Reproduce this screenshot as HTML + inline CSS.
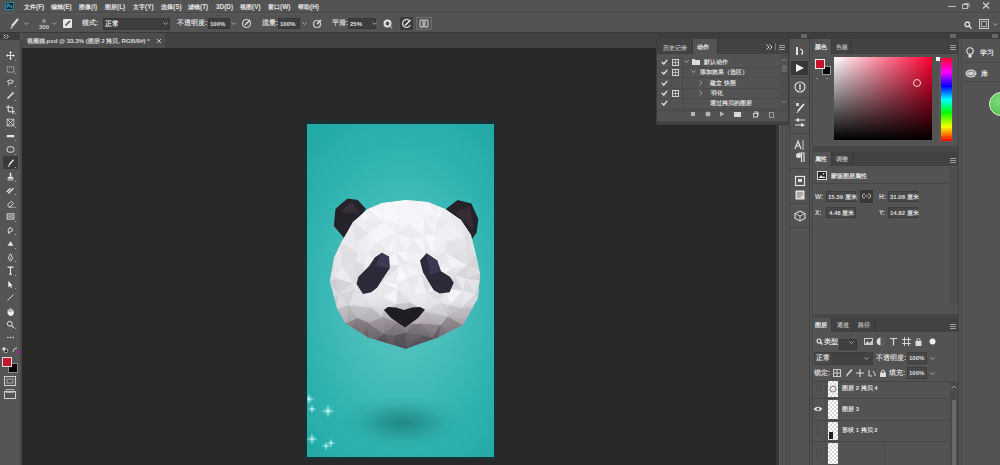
<!DOCTYPE html>
<html><head><meta charset="utf-8">
<style>
*{margin:0;padding:0;box-sizing:border-box}
html,body{width:1000px;height:465px;overflow:hidden;background:#535353;font-family:"Liberation Sans",sans-serif;color:#d6d6d6;font-size:7px}
.a{position:absolute}
.t{position:absolute;white-space:nowrap;font-size:7px;line-height:8px;color:#d0d0d0;font-weight:bold}
</style></head><body>

<div class="a" style="left:0px;top:0px;width:1000px;height:13px;background:#535353;"></div>
<div class="a" style="left:0px;top:12px;width:1000px;height:1px;background:#474747;"></div>
<div class="a" style="left:0px;top:13px;width:1000px;height:1px;background:#5a5a5a;"></div>
<div class="a" style="left:2px;top:0px;width:14px;height:13px;background:radial-gradient(circle,#3f5a60 0%,#535353 80%);"></div>
<div class="a" style="left:5px;top:2px;width:9px;height:8px;background:#0a2430;border:1px solid #2f7f98"></div>
<div class="t" style="left:6.5px;top:3px;font-size:5px;color:#5ab0d0;font-weight:bold;line-height:6px">Ps</div>
<div class="t" style="left:24px;top:2.5px;font-size:6.4px;color:#e4e4e4;">文件(F)</div>
<div class="t" style="left:51px;top:2.5px;font-size:6.4px;color:#e4e4e4;">编辑(E)</div>
<div class="t" style="left:79px;top:2.5px;font-size:6.4px;color:#e4e4e4;">图像(I)</div>
<div class="t" style="left:105px;top:2.5px;font-size:6.4px;color:#e4e4e4;">图层(L)</div>
<div class="t" style="left:133px;top:2.5px;font-size:6.4px;color:#e4e4e4;">文字(Y)</div>
<div class="t" style="left:161px;top:2.5px;font-size:6.4px;color:#e4e4e4;">选择(S)</div>
<div class="t" style="left:188px;top:2.5px;font-size:6.4px;color:#e4e4e4;">滤镜(T)</div>
<div class="t" style="left:216px;top:2.5px;font-size:6.4px;color:#e4e4e4;">3D(D)</div>
<div class="t" style="left:240px;top:2.5px;font-size:6.4px;color:#e4e4e4;">视图(V)</div>
<div class="t" style="left:268px;top:2.5px;font-size:6.4px;color:#e4e4e4;">窗口(W)</div>
<div class="t" style="left:298px;top:2.5px;font-size:6.4px;color:#e4e4e4;">帮助(H)</div>
<div class="a" style="left:948px;top:6px;width:8px;height:1px;background:#bdbdbd;"></div>
<svg class="a" style="left:961px;top:2px;" width="9" height="8" viewBox="0 0 9 8"><rect x="1.5" y="2.5" width="5" height="4" fill="none" stroke="#bbb"/><path d="M3 1.5h5v4" fill="none" stroke="#bbb"/></svg>
<svg class="a" style="left:982px;top:2px;" width="8" height="7" viewBox="0 0 8 7"><path d="M1 0.5L7 6.5M7 0.5L1 6.5" stroke="#d6d6d6" stroke-width="1.1"/></svg>
<div class="a" style="left:0px;top:14px;width:1000px;height:19px;background:#535353;"></div>
<div class="a" style="left:0px;top:32px;width:1000px;height:1px;background:#3a3a3a;"></div>
<svg class="a" style="left:9px;top:18px;" width="10" height="12" viewBox="0 0 10 12"><path d="M9 1L3 8" stroke="#e0e0e0" stroke-width="2"/><path d="M3 8L1 11L4 9.5Z" fill="#e0e0e0"/></svg>
<svg class="a" style="left:24px;top:22px;" width="5" height="4" viewBox="0 0 5 4"><path d="M0.5 0.5L2.5 2.5L4.5 0.5" fill="none" stroke="#aaa"/></svg>
<div class="a" style="left:42px;top:19px;width:4px;height:4px;background:#8a8a8a;border-radius:50%"></div>
<div class="t" style="left:39px;top:23px;font-size:6px;color:#cfcfcf;">300</div>
<svg class="a" style="left:52px;top:22px;" width="5" height="4" viewBox="0 0 5 4"><path d="M0.5 0.5L2.5 2.5L4.5 0.5" fill="none" stroke="#aaa"/></svg>
<div class="a" style="left:63px;top:19px;width:9px;height:9px;background:#e8e8e8;border-radius:1px"></div>
<svg class="a" style="left:64px;top:20px;" width="7" height="7" viewBox="0 0 7 7"><path d="M6 1L1.5 5.5" stroke="#333" stroke-width="1.3"/></svg>
<div class="t" style="left:82px;top:19px;font-size:7px;color:#d2d2d2;">模式:</div>
<div class="a" style="left:103px;top:18px;width:67px;height:12px;background:#3d3d3d;border:1px solid #363636"></div>
<div class="t" style="left:105px;top:20px;font-size:7px;color:#e0e0e0;">正常</div>
<svg class="a" style="left:163px;top:22px;" width="5" height="4" viewBox="0 0 5 4"><path d="M0.5 0.5L2.5 2.5L4.5 0.5" fill="none" stroke="#aaa"/></svg>
<div class="t" style="left:177px;top:19px;font-size:7px;color:#d2d2d2;">不透明度:</div>
<div class="a" style="left:208px;top:18px;width:22px;height:11px;background:#3d3d3d;border:1px solid #363636"></div>
<div class="t" style="left:210px;top:20px;font-size:6px;color:#e0e0e0;">100%</div>
<svg class="a" style="left:231px;top:22px;" width="5" height="4" viewBox="0 0 5 4"><path d="M0.5 0.5L2.5 2.5L4.5 0.5" fill="none" stroke="#aaa"/></svg>
<svg class="a" style="left:241px;top:18px;" width="11" height="11" viewBox="0 0 11 11"><circle cx="5.5" cy="5.5" r="4" fill="none" stroke="#cfcfcf" stroke-width="1.2"/><path d="M4 7L9 2" stroke="#e8e8e8" stroke-width="1.3"/></svg>
<div class="t" style="left:262px;top:19px;font-size:7px;color:#d2d2d2;">流量:</div>
<div class="a" style="left:278px;top:18px;width:22px;height:11px;background:#3d3d3d;border:1px solid #363636"></div>
<div class="t" style="left:280px;top:20px;font-size:6px;color:#e0e0e0;">100%</div>
<svg class="a" style="left:302px;top:22px;" width="5" height="4" viewBox="0 0 5 4"><path d="M0.5 0.5L2.5 2.5L4.5 0.5" fill="none" stroke="#aaa"/></svg>
<svg class="a" style="left:312px;top:18px;" width="11" height="11" viewBox="0 0 11 11"><circle cx="5" cy="6" r="3.5" fill="none" stroke="#cfcfcf" stroke-width="1.2"/><path d="M5 6L9 2" stroke="#e8e8e8" stroke-width="1.3"/></svg>
<div class="t" style="left:332px;top:19px;font-size:7px;color:#d2d2d2;">平滑:</div>
<div class="a" style="left:348px;top:18px;width:28px;height:11px;background:#3d3d3d;border:1px solid #363636"></div>
<div class="t" style="left:350px;top:20px;font-size:6px;color:#e0e0e0;">25%</div>
<svg class="a" style="left:372px;top:22px;" width="5" height="4" viewBox="0 0 5 4"><path d="M0.5 0.5L2.5 2.5L4.5 0.5" fill="none" stroke="#aaa"/></svg>
<svg class="a" style="left:383px;top:19px;" width="10" height="10" viewBox="0 0 10 10"><circle cx="4.5" cy="4.5" r="3" fill="none" stroke="#e0e0e0" stroke-width="2"/><circle cx="8.5" cy="8.5" r="0.8" fill="#ccc"/></svg>
<div class="a" style="left:400px;top:17px;width:13px;height:13px;background:#3b3b3b;border-radius:1px"></div>
<svg class="a" style="left:401px;top:18px;" width="11" height="11" viewBox="0 0 11 11"><path d="M8 2.2A4 4 0 1 0 9.3 7" fill="none" stroke="#cfcfcf" stroke-width="1.3"/><path d="M4 7.5L9.5 2" stroke="#f4f4f4" stroke-width="1.5"/></svg>
<svg class="a" style="left:416px;top:17px;" width="16" height="13" viewBox="0 0 16 13"><rect x="0.5" y="0.5" width="15" height="12" fill="none" stroke="#8a8a8a" stroke-dasharray="1 1"/><path d="M4 3H7V10H4ZM9 3H12V10H9Z" fill="none" stroke="#d0d0d0"/><path d="M8 2V11" stroke="#bbb"/></svg>
<svg class="a" style="left:964px;top:21px;" width="8" height="8" viewBox="0 0 8 8"><circle cx="3.3" cy="3.3" r="2.3" fill="none" stroke="#e0e0e0" stroke-width="1.3"/><path d="M5 5L7.5 7.5" stroke="#e0e0e0" stroke-width="1.5"/></svg>
<svg class="a" style="left:979px;top:19px;" width="10" height="10" viewBox="0 0 10 10"><rect x="0.5" y="0.5" width="9" height="9" fill="none" stroke="#cfcfcf"/><rect x="2.5" y="2.5" width="5" height="5" fill="none" stroke="#aaa"/></svg>
<svg class="a" style="left:993px;top:23px;" width="5" height="4" viewBox="0 0 5 4"><path d="M0.5 0.5L2.5 2.5L4.5 0.5" fill="none" stroke="#aaa"/></svg>
<div class="a" style="left:0px;top:33px;width:1000px;height:15px;background:#424242;"></div>
<div class="a" style="left:22px;top:33px;width:143px;height:15px;background:#4c4c4c;"></div>
<div class="t" style="left:27px;top:37px;font-size:6.2px;color:#d8d8d8;letter-spacing:-0.05px">视频猫.psd @ 33.3% (图层 2 拷贝, RGB/8#) *</div>
<svg class="a" style="left:156px;top:38px;" width="6" height="6" viewBox="0 0 6 6"><path d="M1 1L5 5M5 1L1 5" stroke="#bbb"/></svg>
<div class="a" style="left:22px;top:48px;width:757px;height:417px;background:#282828;"></div>
<div class="a" style="left:776px;top:48px;width:3px;height:417px;background:#363636;"></div>
<div class="a" style="left:0px;top:33px;width:22px;height:432px;background:#545454;"></div>
<div class="a" style="left:16px;top:40px;width:1px;height:425px;background:#575757;"></div>
<div class="a" style="left:20px;top:40px;width:2px;height:425px;background:#474747;"></div>
<div class="a" style="left:0px;top:33px;width:20px;height:7px;background:#3e3e3e;"></div>
<svg class="a" style="left:3px;top:34px;" width="8" height="5" viewBox="0 0 8 5"><path d="M0.5 0.5L2.5 2.5L0.5 4.5M3.5 0.5L5.5 2.5L3.5 4.5" fill="none" stroke="#ccc"/></svg>
<svg class="a" style="left:5.5px;top:51.0px" width="9" height="9" viewBox="0 0 12 12"><path d="M6 1V11M1 6H11" stroke="#e6e6e6" stroke-width="1.3"/><path d="M6 0L4 2.5H8ZM6 12L4 9.5H8ZM0 6L2.5 4V8ZM12 6L9.5 4V8Z" fill="#e6e6e6"/></svg>
<div class="a" style="left:15px;top:60px;width:1px;height:1px;background:#aaa;"></div>
<svg class="a" style="left:5.5px;top:64.5px" width="9" height="9" viewBox="0 0 12 12"><rect x="1.5" y="2.5" width="9" height="7" fill="none" stroke="#e6e6e6" stroke-dasharray="1.5 1"/></svg>
<div class="a" style="left:15px;top:73px;width:1px;height:1px;background:#aaa;"></div>
<svg class="a" style="left:5.5px;top:77.9px" width="9" height="9" viewBox="0 0 12 12"><path d="M2 4Q6 1 10 4Q9 8 5 7Q3 7 2 4Z" fill="none" stroke="#e6e6e6" stroke-width="1.2"/><path d="M4 7L3 10" stroke="#e6e6e6"/></svg>
<div class="a" style="left:15px;top:86px;width:1px;height:1px;background:#aaa;"></div>
<svg class="a" style="left:5.5px;top:91.3px" width="9" height="9" viewBox="0 0 12 12"><path d="M2 10L8 4" stroke="#ececec" stroke-width="1.8"/><path d="M9 1V5M7 3H11" stroke="#e6e6e6"/></svg>
<div class="a" style="left:15px;top:100px;width:1px;height:1px;background:#aaa;"></div>
<svg class="a" style="left:5.5px;top:104.8px" width="9" height="9" viewBox="0 0 12 12"><path d="M3 0V9H12M0 3H9V12" fill="none" stroke="#e6e6e6" stroke-width="1.3"/></svg>
<div class="a" style="left:15px;top:113px;width:1px;height:1px;background:#aaa;"></div>
<svg class="a" style="left:5.5px;top:118.2px" width="9" height="9" viewBox="0 0 12 12"><rect x="1.5" y="1.5" width="9" height="9" fill="none" stroke="#e6e6e6"/><path d="M2 2L10 10M10 2L2 10" stroke="#e6e6e6"/></svg>
<div class="a" style="left:15px;top:127px;width:1px;height:1px;background:#aaa;"></div>
<svg class="a" style="left:5.5px;top:131.7px" width="9" height="9" viewBox="0 0 12 12"><rect x="1" y="4" width="10" height="3" fill="#e6e6e6"/></svg>
<div class="a" style="left:15px;top:140px;width:1px;height:1px;background:#aaa;"></div>
<svg class="a" style="left:5.5px;top:145.1px" width="9" height="9" viewBox="0 0 12 12"><rect x="1.5" y="2.5" width="9" height="7" rx="2.5" fill="none" stroke="#e6e6e6" stroke-width="1.2"/></svg>
<div class="a" style="left:15px;top:154px;width:1px;height:1px;background:#aaa;"></div>
<div class="a" style="left:3px;top:156px;width:15px;height:13px;background:#3a3a3a;"></div>
<svg class="a" style="left:5.5px;top:158.6px" width="9" height="9" viewBox="0 0 12 12"><path d="M10 1L4 8" stroke="#eee" stroke-width="1.8"/><path d="M4 8L2 11L5 9.5Z" fill="#eee"/></svg>
<div class="a" style="left:15px;top:167px;width:1px;height:1px;background:#aaa;"></div>
<svg class="a" style="left:5.5px;top:172.1px" width="9" height="9" viewBox="0 0 12 12"><rect x="5" y="1" width="2" height="5" fill="#e6e6e6"/><path d="M2 9Q2 6 6 6Q10 6 10 9Z" fill="#e6e6e6"/><rect x="2" y="10" width="8" height="1.2" fill="#e6e6e6"/></svg>
<div class="a" style="left:15px;top:181px;width:1px;height:1px;background:#aaa;"></div>
<svg class="a" style="left:5.5px;top:185.5px" width="9" height="9" viewBox="0 0 12 12"><path d="M3 10L10 3M1 8L6 3" stroke="#e6e6e6" stroke-width="1.5"/></svg>
<div class="a" style="left:15px;top:194px;width:1px;height:1px;background:#aaa;"></div>
<svg class="a" style="left:5.5px;top:198.9px" width="9" height="9" viewBox="0 0 12 12"><path d="M2 8L7 3L10 6L5 11Z" fill="none" stroke="#e6e6e6" stroke-width="1.2"/><path d="M3 11H11" stroke="#ccc"/></svg>
<div class="a" style="left:15px;top:207px;width:1px;height:1px;background:#aaa;"></div>
<svg class="a" style="left:5.5px;top:212.4px" width="9" height="9" viewBox="0 0 12 12"><rect x="1.5" y="2.5" width="9" height="7" fill="none" stroke="#e6e6e6" stroke-width="1.2"/><rect x="3" y="4" width="6" height="4" fill="#999"/></svg>
<div class="a" style="left:15px;top:221px;width:1px;height:1px;background:#aaa;"></div>
<svg class="a" style="left:5.5px;top:225.8px" width="9" height="9" viewBox="0 0 12 12"><path d="M4 10Q1 6 5 2Q9 3 9 6Q8 8 6 7Z" fill="none" stroke="#e6e6e6" stroke-width="1.3"/></svg>
<div class="a" style="left:15px;top:234px;width:1px;height:1px;background:#aaa;"></div>
<svg class="a" style="left:5.5px;top:239.3px" width="9" height="9" viewBox="0 0 12 12"><path d="M2 9L6 3L10 9Z" fill="#e6e6e6"/></svg>
<div class="a" style="left:15px;top:248px;width:1px;height:1px;background:#aaa;"></div>
<svg class="a" style="left:5.5px;top:252.8px" width="9" height="9" viewBox="0 0 12 12"><path d="M6 1L9 7L6 11L3 7Z" fill="none" stroke="#e6e6e6" stroke-width="1.2"/><circle cx="6" cy="7" r="0.8" fill="#e6e6e6"/></svg>
<div class="a" style="left:15px;top:261px;width:1px;height:1px;background:#aaa;"></div>
<svg class="a" style="left:5.5px;top:266.2px" width="9" height="9" viewBox="0 0 12 12"><path d="M2 1.5H10M6 1.5V11M4 11H8" stroke="#ececec" stroke-width="1.4"/></svg>
<div class="a" style="left:15px;top:275px;width:1px;height:1px;background:#aaa;"></div>
<svg class="a" style="left:5.5px;top:279.6px" width="9" height="9" viewBox="0 0 12 12"><path d="M3 1V10L5 8L7 11L8 10.5L6.5 7.5H9Z" fill="#ececec"/></svg>
<div class="a" style="left:15px;top:288px;width:1px;height:1px;background:#aaa;"></div>
<svg class="a" style="left:5.5px;top:293.1px" width="9" height="9" viewBox="0 0 12 12"><path d="M2 10L10 2" stroke="#e6e6e6" stroke-width="1.2"/></svg>
<svg class="a" style="left:5.5px;top:306.5px" width="9" height="9" viewBox="0 0 12 12"><path d="M3 6V3.5M5 6V2M7 6V2M9 6.5V3.5M2.5 6Q2 9 5 11H8Q10 9 10 6" fill="#ececec" stroke="#ececec" stroke-width="1.4"/></svg>
<svg class="a" style="left:5.5px;top:320.0px" width="9" height="9" viewBox="0 0 12 12"><circle cx="5" cy="5" r="3.2" fill="none" stroke="#e6e6e6" stroke-width="1.3"/><path d="M7.5 7.5L10.5 10.5" stroke="#e6e6e6" stroke-width="1.5"/></svg>
<div class="a" style="left:15px;top:328px;width:1px;height:1px;background:#aaa;"></div>
<svg class="a" style="left:5.5px;top:333.4px" width="9" height="9" viewBox="0 0 12 12"><circle cx="2.5" cy="6" r="1" fill="#ddd"/><circle cx="6" cy="6" r="1" fill="#ddd"/><circle cx="9.5" cy="6" r="1" fill="#ddd"/></svg>
<svg class="a" style="left:2px;top:347px;" width="7" height="7" viewBox="0 0 7 7"><rect x="0.5" y="0.5" width="3" height="3" fill="#ddd"/><rect x="2.5" y="2.5" width="3" height="3" fill="#222" stroke="#ddd" stroke-width="0.6"/></svg>
<svg class="a" style="left:12px;top:347px;" width="7" height="7" viewBox="0 0 7 7"><path d="M1 5Q1 1 5 1" fill="none" stroke="#ccc"/><rect x="4" y="4" width="2" height="2" fill="#c0a"/></svg>
<div class="a" style="left:8px;top:363px;width:10px;height:10px;background:#050505;border:1px solid #888"></div>
<div class="a" style="left:2px;top:357px;width:10px;height:10px;background:#c1182e;border:1px solid #ddd"></div>
<svg class="a" style="left:4px;top:376px;" width="12" height="10" viewBox="0 0 12 10"><rect x="0.5" y="0.5" width="11" height="9" fill="none" stroke="#cfcfcf"/><rect x="3" y="3" width="6" height="4" fill="none" stroke="#aaa"/></svg>
<svg class="a" style="left:4px;top:389px;" width="12" height="10" viewBox="0 0 12 10"><rect x="0.5" y="2.5" width="11" height="7" fill="none" stroke="#cfcfcf"/><rect x="2.5" y="0.5" width="7" height="3" fill="none" stroke="#aaa"/></svg>
<div class="a" style="left:305px;top:121px;width:191px;height:339px;background:#1b3036;"></div>
<div class="a" style="left:307px;top:124px;width:187px;height:333px;background:radial-gradient(ellipse 140px 210px at 51% 52%,#5cc6c3 0%,#46bdba 38%,#30b3b0 70%,#22aaa7 100%);"></div>
<div class="a" style="left:320px;top:380px;width:170px;height:80px;background:radial-gradient(ellipse 62px 27px at 48.5% 53%,rgba(14,100,100,0.55) 0%,rgba(16,110,110,0.38) 35%,rgba(20,130,130,0.14) 70%,rgba(20,130,130,0) 100%);"></div>
<svg class="a" style="left:307px;top:123px;" width="188" height="335" viewBox="0 0 188 335"><defs><clipPath id="hc"><polygon points="61.0,86.0 75.0,80.0 99.0,77.0 121.0,79.0 138.0,86.0 154.0,97.0 164.0,112.0 169.0,132.0 173.0,151.0 171.0,175.0 156.0,202.0 131.0,214.5 98.7,225.7 61.0,214.5 38.6,200.6 30.0,185.6 23.0,158.0 27.0,135.0 34.0,120.0 46.0,99.0"/></clipPath><linearGradient id="chin" x1="0" y1="0" x2="0" y2="1"><stop offset="0" stop-color="#3c3844" stop-opacity="0"/><stop offset="0.3" stop-color="#3c3844" stop-opacity="0.1"/><stop offset="0.75" stop-color="#3c3844" stop-opacity="0.5"/><stop offset="0.85" stop-color="#2c2834" stop-opacity="0.65"/></linearGradient></defs><polygon points="26.8,103.0 28.5,85.8 40.5,75.4 50.8,77.0 59.0,86.0 37.0,115.0" fill="#25222a"/><polygon points="139.0,86.0 150.6,77.0 164.4,80.6 171.3,96.0 169.6,109.8 164.4,116.7" fill="#25222a"/><polygon points="33.0,89.0 45.0,78.0 53.0,91.0" fill="#3a3038" opacity="0.8"/><polygon points="148.0,90.0 163.0,83.0 167.0,107.0" fill="#3a3038" opacity="0.8"/><g clip-path="url(#hc)"><polygon points="61.0,86.0 75.0,80.0 99.0,77.0 121.0,79.0 138.0,86.0 154.0,97.0 164.0,112.0 169.0,132.0 173.0,151.0 171.0,175.0 156.0,202.0 131.0,214.5 98.7,225.7 61.0,214.5 38.6,200.6 30.0,185.6 23.0,158.0 27.0,135.0 34.0,120.0 46.0,99.0" fill="#ececee"/><polygon points="170.2,116.5 171.2,131.2 161.1,124.4" fill="rgb(228,227,231)" stroke="rgb(228,227,231)" stroke-width="0.4"/><polygon points="13.3,126.7 27.0,135.0 13.1,143.3" fill="rgb(217,216,220)" stroke="rgb(217,216,220)" stroke-width="0.4"/><polygon points="168.3,208.3 172.6,202.4 169.7,226.4" fill="rgb(114,106,110)" stroke="rgb(114,106,110)" stroke-width="0.4"/><polygon points="14.3,221.8 36.1,223.7 44.1,229.3" fill="rgb(106,98,102)" stroke="rgb(106,98,102)" stroke-width="0.4"/><polygon points="31.6,213.6 36.1,223.7 14.3,221.8" fill="rgb(106,98,102)" stroke="rgb(106,98,102)" stroke-width="0.4"/><polygon points="16.8,209.5 31.6,213.6 14.3,221.8" fill="rgb(106,98,102)" stroke="rgb(106,98,102)" stroke-width="0.4"/><polygon points="13.4,184.9 16.8,209.5 14.3,221.8" fill="rgb(110,102,106)" stroke="rgb(110,102,106)" stroke-width="0.4"/><polygon points="27.7,155.3 34.9,142.1 46.2,160.5" fill="rgb(236,235,239)" stroke="rgb(236,235,239)" stroke-width="0.4"/><polygon points="27.0,135.0 27.7,155.3 13.1,143.3" fill="rgb(224,223,227)" stroke="rgb(224,223,227)" stroke-width="0.4"/><polygon points="34.9,142.1 27.7,155.3 27.0,135.0" fill="rgb(229,228,232)" stroke="rgb(229,228,232)" stroke-width="0.4"/><polygon points="34.0,120.0 34.9,142.1 27.0,135.0" fill="rgb(230,229,233)" stroke="rgb(230,229,233)" stroke-width="0.4"/><polygon points="159.5,195.1 168.3,208.3 156.0,202.0" fill="rgb(148,140,144)" stroke="rgb(148,140,144)" stroke-width="0.4"/><polygon points="168.3,208.3 159.5,195.1 172.6,202.4" fill="rgb(146,138,142)" stroke="rgb(146,138,142)" stroke-width="0.4"/><polygon points="172.6,202.4 159.5,195.1 175.0,182.1" fill="rgb(177,176,180)" stroke="rgb(177,176,180)" stroke-width="0.4"/><polygon points="159.5,195.1 154.1,185.3 175.0,182.1" fill="rgb(196,195,199)" stroke="rgb(196,195,199)" stroke-width="0.4"/><polygon points="168.3,208.3 153.8,214.6 156.0,202.0" fill="rgb(132,124,128)" stroke="rgb(132,124,128)" stroke-width="0.4"/><polygon points="118.8,229.3 73.3,229.8 98.0,228.3" fill="rgb(106,98,102)" stroke="rgb(106,98,102)" stroke-width="0.4"/><polygon points="171.2,131.2 169.0,132.0 161.1,124.4" fill="rgb(227,226,230)" stroke="rgb(227,226,230)" stroke-width="0.4"/><polygon points="21.6,201.0 16.8,209.5 13.4,184.9" fill="rgb(164,156,160)" stroke="rgb(164,156,160)" stroke-width="0.4"/><polygon points="21.6,201.0 28.7,185.8 28.3,200.7" fill="rgb(173,165,169)" stroke="rgb(173,165,169)" stroke-width="0.4"/><polygon points="28.7,185.8 21.6,201.0 13.4,184.9" fill="rgb(177,176,180)" stroke="rgb(177,176,180)" stroke-width="0.4"/><polygon points="31.6,213.6 21.6,201.0 28.3,200.7" fill="rgb(147,139,143)" stroke="rgb(147,139,143)" stroke-width="0.4"/><polygon points="16.8,209.5 21.6,201.0 31.6,213.6" fill="rgb(128,120,124)" stroke="rgb(128,120,124)" stroke-width="0.4"/><polygon points="16.1,174.6 28.7,185.8 13.4,184.9" fill="rgb(209,208,212)" stroke="rgb(209,208,212)" stroke-width="0.4"/><polygon points="17.1,160.2 16.1,174.6 13.1,143.3" fill="rgb(206,205,209)" stroke="rgb(206,205,209)" stroke-width="0.4"/><polygon points="16.1,174.6 13.4,184.9 13.1,143.3" fill="rgb(197,196,200)" stroke="rgb(197,196,200)" stroke-width="0.4"/><polygon points="86.0,69.8 34.8,69.3 173.1,67.4" fill="rgb(249,248,252)" stroke="rgb(249,248,252)" stroke-width="0.4"/><polygon points="13.4,86.1 13.3,126.7 13.1,143.3" fill="rgb(216,215,219)" stroke="rgb(216,215,219)" stroke-width="0.4"/><polygon points="169.0,132.0 160.4,142.8 161.1,124.4" fill="rgb(221,220,224)" stroke="rgb(221,220,224)" stroke-width="0.4"/><polygon points="127.1,160.2 139.3,165.2 134.2,165.5" fill="rgb(231,230,234)" stroke="rgb(231,230,234)" stroke-width="0.4"/><polygon points="127.1,160.2 120.5,141.4 134.8,142.2" fill="rgb(234,233,237)" stroke="rgb(234,233,237)" stroke-width="0.4"/><polygon points="164.0,112.0 170.2,116.5 161.1,124.4" fill="rgb(226,225,229)" stroke="rgb(226,225,229)" stroke-width="0.4"/><polygon points="157.7,114.5 164.0,112.0 161.1,124.4" fill="rgb(222,221,225)" stroke="rgb(222,221,225)" stroke-width="0.4"/><polygon points="139.4,117.8 157.7,114.5 161.1,124.4" fill="rgb(231,230,234)" stroke="rgb(231,230,234)" stroke-width="0.4"/><polygon points="116.0,72.5 119.3,82.5 100.7,81.0" fill="rgb(245,244,248)" stroke="rgb(245,244,248)" stroke-width="0.4"/><polygon points="100.4,139.7 88.9,129.8 100.6,128.2" fill="rgb(247,246,250)" stroke="rgb(247,246,250)" stroke-width="0.4"/><polygon points="88.9,129.8 88.5,110.8 100.6,128.2" fill="rgb(239,238,242)" stroke="rgb(239,238,242)" stroke-width="0.4"/><polygon points="57.5,159.1 57.0,140.6 70.8,140.5" fill="rgb(239,238,242)" stroke="rgb(239,238,242)" stroke-width="0.4"/><polygon points="160.6,222.9 168.3,208.3 169.7,226.4" fill="rgb(112,104,108)" stroke="rgb(112,104,108)" stroke-width="0.4"/><polygon points="160.6,222.9 153.8,214.6 168.3,208.3" fill="rgb(110,102,106)" stroke="rgb(110,102,106)" stroke-width="0.4"/><polygon points="118.8,229.3 139.6,226.2 169.7,226.4" fill="rgb(106,98,102)" stroke="rgb(106,98,102)" stroke-width="0.4"/><polygon points="139.6,226.2 118.8,229.3 131.7,224.7" fill="rgb(106,98,102)" stroke="rgb(106,98,102)" stroke-width="0.4"/><polygon points="139.6,226.2 160.6,222.9 169.7,226.4" fill="rgb(106,98,102)" stroke="rgb(106,98,102)" stroke-width="0.4"/><polygon points="160.6,222.9 139.6,226.2 153.8,214.6" fill="rgb(106,98,102)" stroke="rgb(106,98,102)" stroke-width="0.4"/><polygon points="142.4,182.2 155.5,167.5 154.1,185.3" fill="rgb(228,227,231)" stroke="rgb(228,227,231)" stroke-width="0.4"/><polygon points="142.4,182.2 139.3,165.2 155.5,167.5" fill="rgb(244,243,247)" stroke="rgb(244,243,247)" stroke-width="0.4"/><polygon points="154.1,185.3 171.0,175.0 175.0,182.1" fill="rgb(214,213,217)" stroke="rgb(214,213,217)" stroke-width="0.4"/><polygon points="99.5,71.5 155.2,68.6 116.0,72.5" fill="rgb(247,246,250)" stroke="rgb(247,246,250)" stroke-width="0.4"/><polygon points="155.2,68.6 86.0,69.8 173.1,67.4" fill="rgb(241,240,244)" stroke="rgb(241,240,244)" stroke-width="0.4"/><polygon points="155.2,68.6 99.5,71.5 86.0,69.8" fill="rgb(250,249,253)" stroke="rgb(250,249,253)" stroke-width="0.4"/><polygon points="16.1,174.6 31.7,171.3 28.7,185.8" fill="rgb(204,203,207)" stroke="rgb(204,203,207)" stroke-width="0.4"/><polygon points="31.7,171.3 27.7,155.3 46.2,160.5" fill="rgb(213,212,216)" stroke="rgb(213,212,216)" stroke-width="0.4"/><polygon points="31.7,171.3 16.1,174.6 17.1,160.2" fill="rgb(222,221,225)" stroke="rgb(222,221,225)" stroke-width="0.4"/><polygon points="13.3,126.7 27.3,124.2 27.0,135.0" fill="rgb(211,210,214)" stroke="rgb(211,210,214)" stroke-width="0.4"/><polygon points="27.3,124.2 34.0,120.0 27.0,135.0" fill="rgb(228,227,231)" stroke="rgb(228,227,231)" stroke-width="0.4"/><polygon points="13.4,86.1 18.1,103.7 13.3,126.7" fill="rgb(222,221,225)" stroke="rgb(222,221,225)" stroke-width="0.4"/><polygon points="46.0,99.0 47.3,86.1 58.2,96.5" fill="rgb(240,239,243)" stroke="rgb(240,239,243)" stroke-width="0.4"/><polygon points="47.3,86.1 46.0,99.0 41.6,98.9" fill="rgb(239,238,242)" stroke="rgb(239,238,242)" stroke-width="0.4"/><polygon points="44.0,75.7 34.8,69.3 55.1,75.2" fill="rgb(247,246,250)" stroke="rgb(247,246,250)" stroke-width="0.4"/><polygon points="47.3,86.1 44.0,75.7 55.1,75.2" fill="rgb(240,239,243)" stroke="rgb(240,239,243)" stroke-width="0.4"/><polygon points="160.4,142.8 139.1,130.5 161.1,124.4" fill="rgb(225,224,228)" stroke="rgb(225,224,228)" stroke-width="0.4"/><polygon points="139.1,130.5 139.4,117.8 161.1,124.4" fill="rgb(229,228,232)" stroke="rgb(229,228,232)" stroke-width="0.4"/><polygon points="139.1,130.5 144.2,146.0 134.8,142.2" fill="rgb(235,234,238)" stroke="rgb(235,234,238)" stroke-width="0.4"/><polygon points="144.2,146.0 139.1,130.5 160.4,142.8" fill="rgb(243,242,246)" stroke="rgb(243,242,246)" stroke-width="0.4"/><polygon points="144.2,146.0 127.1,160.2 134.8,142.2" fill="rgb(242,241,245)" stroke="rgb(242,241,245)" stroke-width="0.4"/><polygon points="171.3,145.8 160.4,142.8 169.0,132.0" fill="rgb(214,213,217)" stroke="rgb(214,213,217)" stroke-width="0.4"/><polygon points="173.0,151.0 171.3,145.8 171.2,131.2" fill="rgb(211,210,214)" stroke="rgb(211,210,214)" stroke-width="0.4"/><polygon points="171.3,145.8 169.0,132.0 171.2,131.2" fill="rgb(216,215,219)" stroke="rgb(216,215,219)" stroke-width="0.4"/><polygon points="159.0,155.8 171.3,145.8 173.0,151.0" fill="rgb(222,221,225)" stroke="rgb(222,221,225)" stroke-width="0.4"/><polygon points="160.4,142.8 171.3,145.8 159.0,155.8" fill="rgb(221,220,224)" stroke="rgb(221,220,224)" stroke-width="0.4"/><polygon points="118.7,132.1 100.4,139.7 100.6,128.2" fill="rgb(242,241,245)" stroke="rgb(242,241,245)" stroke-width="0.4"/><polygon points="118.7,132.1 120.5,141.4 100.4,139.7" fill="rgb(242,241,245)" stroke="rgb(242,241,245)" stroke-width="0.4"/><polygon points="120.5,141.4 113.0,151.5 100.4,139.7" fill="rgb(236,235,239)" stroke="rgb(236,235,239)" stroke-width="0.4"/><polygon points="113.0,151.5 120.5,141.4 127.1,160.2" fill="rgb(236,235,239)" stroke="rgb(236,235,239)" stroke-width="0.4"/><polygon points="164.0,112.0 173.7,98.0 170.2,116.5" fill="rgb(225,224,228)" stroke="rgb(225,224,228)" stroke-width="0.4"/><polygon points="170.2,116.5 173.7,98.0 171.2,131.2" fill="rgb(221,220,224)" stroke="rgb(221,220,224)" stroke-width="0.4"/><polygon points="173.7,98.0 173.0,151.0 171.2,131.2" fill="rgb(221,220,224)" stroke="rgb(221,220,224)" stroke-width="0.4"/><polygon points="173.0,151.0 173.7,98.0 175.0,182.1" fill="rgb(231,230,234)" stroke="rgb(231,230,234)" stroke-width="0.4"/><polygon points="139.4,117.8 143.0,96.0 157.7,114.5" fill="rgb(239,238,242)" stroke="rgb(239,238,242)" stroke-width="0.4"/><polygon points="143.0,96.0 139.4,117.8 129.1,111.4" fill="rgb(240,239,243)" stroke="rgb(240,239,243)" stroke-width="0.4"/><polygon points="116.7,112.8 105.8,115.4 103.1,101.4" fill="rgb(237,236,240)" stroke="rgb(237,236,240)" stroke-width="0.4"/><polygon points="88.5,110.8 105.8,115.4 100.6,128.2" fill="rgb(244,243,247)" stroke="rgb(244,243,247)" stroke-width="0.4"/><polygon points="105.8,115.4 88.5,110.8 103.1,101.4" fill="rgb(236,235,239)" stroke="rgb(236,235,239)" stroke-width="0.4"/><polygon points="105.8,115.4 118.7,132.1 100.6,128.2" fill="rgb(236,235,239)" stroke="rgb(236,235,239)" stroke-width="0.4"/><polygon points="118.7,132.1 105.8,115.4 116.7,112.8" fill="rgb(245,244,248)" stroke="rgb(245,244,248)" stroke-width="0.4"/><polygon points="117.8,96.5 116.7,112.8 103.1,101.4" fill="rgb(247,246,250)" stroke="rgb(247,246,250)" stroke-width="0.4"/><polygon points="117.8,96.5 119.3,82.5 127.7,89.8" fill="rgb(245,244,248)" stroke="rgb(245,244,248)" stroke-width="0.4"/><polygon points="116.7,112.8 117.8,96.5 129.1,111.4" fill="rgb(236,235,239)" stroke="rgb(236,235,239)" stroke-width="0.4"/><polygon points="117.8,96.5 103.1,101.4 100.7,81.0" fill="rgb(245,244,248)" stroke="rgb(245,244,248)" stroke-width="0.4"/><polygon points="119.3,82.5 117.8,96.5 100.7,81.0" fill="rgb(244,243,247)" stroke="rgb(244,243,247)" stroke-width="0.4"/><polygon points="135.0,74.9 155.2,68.6 145.2,76.9" fill="rgb(245,244,248)" stroke="rgb(245,244,248)" stroke-width="0.4"/><polygon points="155.2,68.6 135.0,74.9 116.0,72.5" fill="rgb(252,251,255)" stroke="rgb(252,251,255)" stroke-width="0.4"/><polygon points="89.9,83.0 92.8,100.9 77.2,98.8" fill="rgb(247,246,250)" stroke="rgb(247,246,250)" stroke-width="0.4"/><polygon points="88.5,110.8 92.8,100.9 103.1,101.4" fill="rgb(241,240,244)" stroke="rgb(241,240,244)" stroke-width="0.4"/><polygon points="92.8,100.9 88.5,110.8 77.2,98.8" fill="rgb(240,239,243)" stroke="rgb(240,239,243)" stroke-width="0.4"/><polygon points="103.1,101.4 92.8,100.9 100.7,81.0" fill="rgb(246,245,249)" stroke="rgb(246,245,249)" stroke-width="0.4"/><polygon points="92.8,100.9 89.9,83.0 100.7,81.0" fill="rgb(246,245,249)" stroke="rgb(246,245,249)" stroke-width="0.4"/><polygon points="69.1,82.9 60.0,83.5 55.1,75.2" fill="rgb(240,239,243)" stroke="rgb(240,239,243)" stroke-width="0.4"/><polygon points="60.0,83.5 47.3,86.1 55.1,75.2" fill="rgb(243,242,246)" stroke="rgb(243,242,246)" stroke-width="0.4"/><polygon points="61.0,86.0 77.2,98.8 58.2,96.5" fill="rgb(239,238,242)" stroke="rgb(239,238,242)" stroke-width="0.4"/><polygon points="61.0,86.0 69.1,82.9 77.2,98.8" fill="rgb(249,248,252)" stroke="rgb(249,248,252)" stroke-width="0.4"/><polygon points="61.0,86.0 60.0,83.5 69.1,82.9" fill="rgb(249,248,252)" stroke="rgb(249,248,252)" stroke-width="0.4"/><polygon points="47.3,86.1 61.0,86.0 58.2,96.5" fill="rgb(246,245,249)" stroke="rgb(246,245,249)" stroke-width="0.4"/><polygon points="60.0,83.5 61.0,86.0 47.3,86.1" fill="rgb(240,239,243)" stroke="rgb(240,239,243)" stroke-width="0.4"/><polygon points="75.0,80.0 89.9,83.0 77.2,98.8" fill="rgb(248,247,251)" stroke="rgb(248,247,251)" stroke-width="0.4"/><polygon points="69.1,82.9 75.0,80.0 77.2,98.8" fill="rgb(245,244,248)" stroke="rgb(245,244,248)" stroke-width="0.4"/><polygon points="89.9,83.0 75.0,80.0 86.0,69.8" fill="rgb(247,246,250)" stroke="rgb(247,246,250)" stroke-width="0.4"/><polygon points="34.9,142.1 48.3,139.3 46.2,160.5" fill="rgb(225,224,228)" stroke="rgb(225,224,228)" stroke-width="0.4"/><polygon points="48.3,139.3 57.5,159.1 46.2,160.5" fill="rgb(220,219,223)" stroke="rgb(220,219,223)" stroke-width="0.4"/><polygon points="57.5,159.1 48.3,139.3 57.0,140.6" fill="rgb(221,220,224)" stroke="rgb(221,220,224)" stroke-width="0.4"/><polygon points="88.5,110.8 70.9,118.3 77.2,98.8" fill="rgb(246,245,249)" stroke="rgb(246,245,249)" stroke-width="0.4"/><polygon points="73.3,229.8 86.8,228.1 98.0,228.3" fill="rgb(106,98,102)" stroke="rgb(106,98,102)" stroke-width="0.4"/><polygon points="77.3,210.8 86.8,228.1 73.3,229.8" fill="rgb(108,100,104)" stroke="rgb(108,100,104)" stroke-width="0.4"/><polygon points="38.6,200.6 31.6,213.6 28.3,200.7" fill="rgb(146,138,142)" stroke="rgb(146,138,142)" stroke-width="0.4"/><polygon points="139.6,226.2 144.8,210.0 153.8,214.6" fill="rgb(106,98,102)" stroke="rgb(106,98,102)" stroke-width="0.4"/><polygon points="153.8,214.6 144.8,210.0 156.0,202.0" fill="rgb(128,120,124)" stroke="rgb(128,120,124)" stroke-width="0.4"/><polygon points="144.8,210.0 140.6,193.3 156.0,202.0" fill="rgb(156,148,152)" stroke="rgb(156,148,152)" stroke-width="0.4"/><polygon points="140.6,193.3 144.8,210.0 133.7,201.9" fill="rgb(160,152,156)" stroke="rgb(160,152,156)" stroke-width="0.4"/><polygon points="140.6,193.3 142.4,182.2 154.1,185.3" fill="rgb(205,204,208)" stroke="rgb(205,204,208)" stroke-width="0.4"/><polygon points="140.6,193.3 159.5,195.1 156.0,202.0" fill="rgb(194,186,190)" stroke="rgb(194,186,190)" stroke-width="0.4"/><polygon points="159.5,195.1 140.6,193.3 154.1,185.3" fill="rgb(196,195,199)" stroke="rgb(196,195,199)" stroke-width="0.4"/><polygon points="118.8,229.3 125.8,214.5 131.7,224.7" fill="rgb(106,98,102)" stroke="rgb(106,98,102)" stroke-width="0.4"/><polygon points="114.3,211.6 125.8,214.5 118.8,229.3" fill="rgb(110,102,106)" stroke="rgb(110,102,106)" stroke-width="0.4"/><polygon points="98.7,225.7 118.8,229.3 98.0,228.3" fill="rgb(106,98,102)" stroke="rgb(106,98,102)" stroke-width="0.4"/><polygon points="98.7,225.7 114.3,211.6 118.8,229.3" fill="rgb(112,104,108)" stroke="rgb(112,104,108)" stroke-width="0.4"/><polygon points="86.8,228.1 98.7,225.7 98.0,228.3" fill="rgb(106,98,102)" stroke="rgb(106,98,102)" stroke-width="0.4"/><polygon points="125.8,214.5 114.3,200.2 133.7,201.9" fill="rgb(161,153,157)" stroke="rgb(161,153,157)" stroke-width="0.4"/><polygon points="114.3,200.2 125.8,214.5 114.3,211.6" fill="rgb(148,140,144)" stroke="rgb(148,140,144)" stroke-width="0.4"/><polygon points="155.5,167.5 168.9,170.7 154.1,185.3" fill="rgb(232,231,235)" stroke="rgb(232,231,235)" stroke-width="0.4"/><polygon points="168.9,170.7 171.0,175.0 154.1,185.3" fill="rgb(214,213,217)" stroke="rgb(214,213,217)" stroke-width="0.4"/><polygon points="168.9,170.7 155.5,167.5 159.0,155.8" fill="rgb(219,218,222)" stroke="rgb(219,218,222)" stroke-width="0.4"/><polygon points="99.0,77.0 116.0,72.5 100.7,81.0" fill="rgb(244,243,247)" stroke="rgb(244,243,247)" stroke-width="0.4"/><polygon points="99.0,77.0 99.5,71.5 116.0,72.5" fill="rgb(252,251,255)" stroke="rgb(252,251,255)" stroke-width="0.4"/><polygon points="89.9,83.0 99.0,77.0 100.7,81.0" fill="rgb(247,246,250)" stroke="rgb(247,246,250)" stroke-width="0.4"/><polygon points="99.0,77.0 89.9,83.0 86.0,69.8" fill="rgb(252,251,255)" stroke="rgb(252,251,255)" stroke-width="0.4"/><polygon points="99.5,71.5 99.0,77.0 86.0,69.8" fill="rgb(247,246,250)" stroke="rgb(247,246,250)" stroke-width="0.4"/><polygon points="23.0,158.0 31.7,171.3 17.1,160.2" fill="rgb(216,215,219)" stroke="rgb(216,215,219)" stroke-width="0.4"/><polygon points="31.7,171.3 23.0,158.0 27.7,155.3" fill="rgb(204,203,207)" stroke="rgb(204,203,207)" stroke-width="0.4"/><polygon points="23.0,158.0 17.1,160.2 13.1,143.3" fill="rgb(208,207,211)" stroke="rgb(208,207,211)" stroke-width="0.4"/><polygon points="27.7,155.3 23.0,158.0 13.1,143.3" fill="rgb(222,221,225)" stroke="rgb(222,221,225)" stroke-width="0.4"/><polygon points="27.3,124.2 28.3,117.5 34.0,120.0" fill="rgb(220,219,223)" stroke="rgb(220,219,223)" stroke-width="0.4"/><polygon points="34.0,120.0 30.6,101.0 41.6,98.9" fill="rgb(234,233,237)" stroke="rgb(234,233,237)" stroke-width="0.4"/><polygon points="28.3,117.5 30.6,101.0 34.0,120.0" fill="rgb(228,227,231)" stroke="rgb(228,227,231)" stroke-width="0.4"/><polygon points="31.7,90.2 44.0,75.7 47.3,86.1" fill="rgb(232,231,235)" stroke="rgb(232,231,235)" stroke-width="0.4"/><polygon points="34.8,69.3 31.7,90.2 19.3,76.0" fill="rgb(228,227,231)" stroke="rgb(228,227,231)" stroke-width="0.4"/><polygon points="44.0,75.7 31.7,90.2 34.8,69.3" fill="rgb(233,232,236)" stroke="rgb(233,232,236)" stroke-width="0.4"/><polygon points="31.7,90.2 13.4,86.1 19.3,76.0" fill="rgb(224,223,227)" stroke="rgb(224,223,227)" stroke-width="0.4"/><polygon points="31.7,90.2 47.3,86.1 41.6,98.9" fill="rgb(233,232,236)" stroke="rgb(233,232,236)" stroke-width="0.4"/><polygon points="30.6,101.0 31.7,90.2 41.6,98.9" fill="rgb(228,227,231)" stroke="rgb(228,227,231)" stroke-width="0.4"/><polygon points="31.7,90.2 18.1,103.7 13.4,86.1" fill="rgb(221,220,224)" stroke="rgb(221,220,224)" stroke-width="0.4"/><polygon points="31.7,90.2 30.6,101.0 18.1,103.7" fill="rgb(222,221,225)" stroke="rgb(222,221,225)" stroke-width="0.4"/><polygon points="147.4,152.1 160.4,142.8 159.0,155.8" fill="rgb(216,215,219)" stroke="rgb(216,215,219)" stroke-width="0.4"/><polygon points="147.4,152.1 144.2,146.0 160.4,142.8" fill="rgb(229,228,232)" stroke="rgb(229,228,232)" stroke-width="0.4"/><polygon points="155.5,167.5 147.4,152.1 159.0,155.8" fill="rgb(233,232,236)" stroke="rgb(233,232,236)" stroke-width="0.4"/><polygon points="139.3,165.2 147.4,152.1 155.5,167.5" fill="rgb(216,215,219)" stroke="rgb(216,215,219)" stroke-width="0.4"/><polygon points="127.1,160.2 147.4,152.1 139.3,165.2" fill="rgb(232,231,235)" stroke="rgb(232,231,235)" stroke-width="0.4"/><polygon points="144.2,146.0 147.4,152.1 127.1,160.2" fill="rgb(227,226,230)" stroke="rgb(227,226,230)" stroke-width="0.4"/><polygon points="92.5,142.7 88.9,129.8 100.4,139.7" fill="rgb(232,231,235)" stroke="rgb(232,231,235)" stroke-width="0.4"/><polygon points="88.9,129.8 92.5,142.7 70.8,140.5" fill="rgb(246,245,249)" stroke="rgb(246,245,249)" stroke-width="0.4"/><polygon points="64.4,184.4 76.6,173.2 77.1,185.6" fill="rgb(228,227,231)" stroke="rgb(228,227,231)" stroke-width="0.4"/><polygon points="126.5,132.3 116.7,112.8 129.1,111.4" fill="rgb(247,246,250)" stroke="rgb(247,246,250)" stroke-width="0.4"/><polygon points="126.5,132.3 118.7,132.1 116.7,112.8" fill="rgb(237,236,240)" stroke="rgb(237,236,240)" stroke-width="0.4"/><polygon points="139.4,117.8 126.5,132.3 129.1,111.4" fill="rgb(241,240,244)" stroke="rgb(241,240,244)" stroke-width="0.4"/><polygon points="139.1,130.5 126.5,132.3 139.4,117.8" fill="rgb(237,236,240)" stroke="rgb(237,236,240)" stroke-width="0.4"/><polygon points="126.5,132.3 139.1,130.5 134.8,142.2" fill="rgb(231,230,234)" stroke="rgb(231,230,234)" stroke-width="0.4"/><polygon points="120.5,141.4 126.5,132.3 134.8,142.2" fill="rgb(242,241,245)" stroke="rgb(242,241,245)" stroke-width="0.4"/><polygon points="118.7,132.1 126.5,132.3 120.5,141.4" fill="rgb(237,236,240)" stroke="rgb(237,236,240)" stroke-width="0.4"/><polygon points="113.0,151.5 100.3,155.0 100.4,139.7" fill="rgb(243,242,246)" stroke="rgb(243,242,246)" stroke-width="0.4"/><polygon points="100.3,155.0 92.5,142.7 100.4,139.7" fill="rgb(238,237,241)" stroke="rgb(238,237,241)" stroke-width="0.4"/><polygon points="154.0,97.0 164.0,112.0 157.7,114.5" fill="rgb(227,226,230)" stroke="rgb(227,226,230)" stroke-width="0.4"/><polygon points="143.0,96.0 154.0,97.0 157.7,114.5" fill="rgb(235,234,238)" stroke="rgb(235,234,238)" stroke-width="0.4"/><polygon points="135.0,74.9 138.0,86.0 127.7,89.8" fill="rgb(244,243,247)" stroke="rgb(244,243,247)" stroke-width="0.4"/><polygon points="138.0,86.0 135.0,74.9 145.2,76.9" fill="rgb(247,246,250)" stroke="rgb(247,246,250)" stroke-width="0.4"/><polygon points="129.4,97.4 117.8,96.5 127.7,89.8" fill="rgb(241,240,244)" stroke="rgb(241,240,244)" stroke-width="0.4"/><polygon points="117.8,96.5 129.4,97.4 129.1,111.4" fill="rgb(243,242,246)" stroke="rgb(243,242,246)" stroke-width="0.4"/><polygon points="129.4,97.4 143.0,96.0 129.1,111.4" fill="rgb(235,234,238)" stroke="rgb(235,234,238)" stroke-width="0.4"/><polygon points="138.0,86.0 129.4,97.4 127.7,89.8" fill="rgb(246,245,249)" stroke="rgb(246,245,249)" stroke-width="0.4"/><polygon points="129.4,97.4 138.0,86.0 143.0,96.0" fill="rgb(238,237,241)" stroke="rgb(238,237,241)" stroke-width="0.4"/><polygon points="121.0,79.0 119.3,82.5 116.0,72.5" fill="rgb(240,239,243)" stroke="rgb(240,239,243)" stroke-width="0.4"/><polygon points="135.0,74.9 121.0,79.0 116.0,72.5" fill="rgb(247,246,250)" stroke="rgb(247,246,250)" stroke-width="0.4"/><polygon points="119.3,82.5 121.0,79.0 127.7,89.8" fill="rgb(251,250,254)" stroke="rgb(251,250,254)" stroke-width="0.4"/><polygon points="121.0,79.0 135.0,74.9 127.7,89.8" fill="rgb(240,239,243)" stroke="rgb(240,239,243)" stroke-width="0.4"/><polygon points="77.0,71.7 69.1,82.9 55.1,75.2" fill="rgb(242,241,245)" stroke="rgb(242,241,245)" stroke-width="0.4"/><polygon points="77.0,71.7 75.0,80.0 69.1,82.9" fill="rgb(244,243,247)" stroke="rgb(244,243,247)" stroke-width="0.4"/><polygon points="75.0,80.0 77.0,71.7 86.0,69.8" fill="rgb(244,243,247)" stroke="rgb(244,243,247)" stroke-width="0.4"/><polygon points="77.0,71.7 34.8,69.3 86.0,69.8" fill="rgb(248,247,251)" stroke="rgb(248,247,251)" stroke-width="0.4"/><polygon points="34.8,69.3 77.0,71.7 55.1,75.2" fill="rgb(241,240,244)" stroke="rgb(241,240,244)" stroke-width="0.4"/><polygon points="77.7,126.4 88.9,129.8 70.8,140.5" fill="rgb(234,233,237)" stroke="rgb(234,233,237)" stroke-width="0.4"/><polygon points="88.9,129.8 77.7,126.4 88.5,110.8" fill="rgb(244,243,247)" stroke="rgb(244,243,247)" stroke-width="0.4"/><polygon points="77.7,126.4 70.9,118.3 88.5,110.8" fill="rgb(239,238,242)" stroke="rgb(239,238,242)" stroke-width="0.4"/><polygon points="57.0,140.6 59.3,128.2 70.8,140.5" fill="rgb(240,239,243)" stroke="rgb(240,239,243)" stroke-width="0.4"/><polygon points="59.3,128.2 77.7,126.4 70.8,140.5" fill="rgb(231,230,234)" stroke="rgb(231,230,234)" stroke-width="0.4"/><polygon points="77.7,126.4 59.3,128.2 70.9,118.3" fill="rgb(235,234,238)" stroke="rgb(235,234,238)" stroke-width="0.4"/><polygon points="61.2,222.9 77.3,210.8 73.3,229.8" fill="rgb(106,98,102)" stroke="rgb(106,98,102)" stroke-width="0.4"/><polygon points="61.2,222.9 61.0,214.5 77.3,210.8" fill="rgb(137,129,133)" stroke="rgb(137,129,133)" stroke-width="0.4"/><polygon points="61.2,222.9 73.3,229.8 44.1,229.3" fill="rgb(106,98,102)" stroke="rgb(106,98,102)" stroke-width="0.4"/><polygon points="57.5,159.1 47.4,166.8 46.2,160.5" fill="rgb(231,230,234)" stroke="rgb(231,230,234)" stroke-width="0.4"/><polygon points="47.4,166.8 31.7,171.3 46.2,160.5" fill="rgb(224,223,227)" stroke="rgb(224,223,227)" stroke-width="0.4"/><polygon points="64.4,184.4 60.7,199.4 49.8,195.0" fill="rgb(196,195,199)" stroke="rgb(196,195,199)" stroke-width="0.4"/><polygon points="61.0,214.5 60.7,199.4 77.3,210.8" fill="rgb(143,135,139)" stroke="rgb(143,135,139)" stroke-width="0.4"/><polygon points="28.7,185.8 30.0,185.6 28.3,200.7" fill="rgb(202,201,205)" stroke="rgb(202,201,205)" stroke-width="0.4"/><polygon points="30.0,185.6 38.6,200.6 28.3,200.7" fill="rgb(174,166,170)" stroke="rgb(174,166,170)" stroke-width="0.4"/><polygon points="31.7,171.3 30.0,185.6 28.7,185.8" fill="rgb(204,203,207)" stroke="rgb(204,203,207)" stroke-width="0.4"/><polygon points="60.7,199.4 56.3,213.6 49.8,195.0" fill="rgb(146,138,142)" stroke="rgb(146,138,142)" stroke-width="0.4"/><polygon points="56.3,213.6 60.7,199.4 61.0,214.5" fill="rgb(128,120,124)" stroke="rgb(128,120,124)" stroke-width="0.4"/><polygon points="56.3,213.6 61.2,222.9 44.1,229.3" fill="rgb(110,102,106)" stroke="rgb(110,102,106)" stroke-width="0.4"/><polygon points="61.2,222.9 56.3,213.6 61.0,214.5" fill="rgb(125,117,121)" stroke="rgb(125,117,121)" stroke-width="0.4"/><polygon points="131.0,214.5 139.6,226.2 131.7,224.7" fill="rgb(106,98,102)" stroke="rgb(106,98,102)" stroke-width="0.4"/><polygon points="131.0,214.5 144.8,210.0 139.6,226.2" fill="rgb(107,99,103)" stroke="rgb(107,99,103)" stroke-width="0.4"/><polygon points="125.8,214.5 131.0,214.5 131.7,224.7" fill="rgb(115,107,111)" stroke="rgb(115,107,111)" stroke-width="0.4"/><polygon points="144.8,210.0 131.0,214.5 133.7,201.9" fill="rgb(151,143,147)" stroke="rgb(151,143,147)" stroke-width="0.4"/><polygon points="131.0,214.5 125.8,214.5 133.7,201.9" fill="rgb(115,107,111)" stroke="rgb(115,107,111)" stroke-width="0.4"/><polygon points="98.7,225.7 99.2,209.5 114.3,211.6" fill="rgb(130,122,126)" stroke="rgb(130,122,126)" stroke-width="0.4"/><polygon points="172.9,157.6 159.0,155.8 173.0,151.0" fill="rgb(210,209,213)" stroke="rgb(210,209,213)" stroke-width="0.4"/><polygon points="172.9,157.6 168.9,170.7 159.0,155.8" fill="rgb(227,226,230)" stroke="rgb(227,226,230)" stroke-width="0.4"/><polygon points="168.9,170.7 172.9,157.6 171.0,175.0" fill="rgb(206,205,209)" stroke="rgb(206,205,209)" stroke-width="0.4"/><polygon points="172.9,157.6 173.0,151.0 175.0,182.1" fill="rgb(211,210,214)" stroke="rgb(211,210,214)" stroke-width="0.4"/><polygon points="171.0,175.0 172.9,157.6 175.0,182.1" fill="rgb(201,200,204)" stroke="rgb(201,200,204)" stroke-width="0.4"/><polygon points="18.1,103.7 21.7,115.6 13.3,126.7" fill="rgb(213,212,216)" stroke="rgb(213,212,216)" stroke-width="0.4"/><polygon points="21.7,115.6 27.3,124.2 13.3,126.7" fill="rgb(224,223,227)" stroke="rgb(224,223,227)" stroke-width="0.4"/><polygon points="21.7,115.6 28.3,117.5 27.3,124.2" fill="rgb(226,225,229)" stroke="rgb(226,225,229)" stroke-width="0.4"/><polygon points="30.6,101.0 21.7,115.6 18.1,103.7" fill="rgb(221,220,224)" stroke="rgb(221,220,224)" stroke-width="0.4"/><polygon points="21.7,115.6 30.6,101.0 28.3,117.5" fill="rgb(221,220,224)" stroke="rgb(221,220,224)" stroke-width="0.4"/><polygon points="92.5,142.7 75.8,158.2 70.8,140.5" fill="rgb(222,221,225)" stroke="rgb(222,221,225)" stroke-width="0.4"/><polygon points="76.6,173.2 75.8,158.2 90.3,166.1" fill="rgb(232,231,235)" stroke="rgb(232,231,235)" stroke-width="0.4"/><polygon points="75.8,158.2 57.5,159.1 70.8,140.5" fill="rgb(235,234,238)" stroke="rgb(235,234,238)" stroke-width="0.4"/><polygon points="55.6,169.1 76.6,173.2 64.4,184.4" fill="rgb(231,230,234)" stroke="rgb(231,230,234)" stroke-width="0.4"/><polygon points="55.6,169.1 47.4,166.8 57.5,159.1" fill="rgb(229,228,232)" stroke="rgb(229,228,232)" stroke-width="0.4"/><polygon points="75.8,158.2 55.6,169.1 57.5,159.1" fill="rgb(224,223,227)" stroke="rgb(224,223,227)" stroke-width="0.4"/><polygon points="55.6,169.1 75.8,158.2 76.6,173.2" fill="rgb(233,232,236)" stroke="rgb(233,232,236)" stroke-width="0.4"/><polygon points="89.3,160.7 100.3,155.0 90.3,166.1" fill="rgb(236,235,239)" stroke="rgb(236,235,239)" stroke-width="0.4"/><polygon points="100.3,155.0 89.3,160.7 92.5,142.7" fill="rgb(248,247,251)" stroke="rgb(248,247,251)" stroke-width="0.4"/><polygon points="75.8,158.2 89.3,160.7 90.3,166.1" fill="rgb(251,250,254)" stroke="rgb(251,250,254)" stroke-width="0.4"/><polygon points="89.3,160.7 75.8,158.2 92.5,142.7" fill="rgb(236,235,239)" stroke="rgb(236,235,239)" stroke-width="0.4"/><polygon points="167.9,86.4 155.2,68.6 173.1,67.4" fill="rgb(229,228,232)" stroke="rgb(229,228,232)" stroke-width="0.4"/><polygon points="173.7,98.0 167.9,86.4 173.1,67.4" fill="rgb(226,225,229)" stroke="rgb(226,225,229)" stroke-width="0.4"/><polygon points="144.1,89.5 154.0,97.0 143.0,96.0" fill="rgb(236,235,239)" stroke="rgb(236,235,239)" stroke-width="0.4"/><polygon points="144.1,89.5 138.0,86.0 145.2,76.9" fill="rgb(239,238,242)" stroke="rgb(239,238,242)" stroke-width="0.4"/><polygon points="138.0,86.0 144.1,89.5 143.0,96.0" fill="rgb(241,240,244)" stroke="rgb(241,240,244)" stroke-width="0.4"/><polygon points="162.7,97.2 173.7,98.0 164.0,112.0" fill="rgb(223,222,226)" stroke="rgb(223,222,226)" stroke-width="0.4"/><polygon points="154.0,97.0 162.7,97.2 164.0,112.0" fill="rgb(233,232,236)" stroke="rgb(233,232,236)" stroke-width="0.4"/><polygon points="162.7,97.2 167.9,86.4 173.7,98.0" fill="rgb(227,226,230)" stroke="rgb(227,226,230)" stroke-width="0.4"/><polygon points="48.3,139.3 50.7,129.6 57.0,140.6" fill="rgb(235,234,238)" stroke="rgb(235,234,238)" stroke-width="0.4"/><polygon points="50.7,129.6 59.3,128.2 57.0,140.6" fill="rgb(234,233,237)" stroke="rgb(234,233,237)" stroke-width="0.4"/><polygon points="34.0,120.0 50.7,129.6 34.9,142.1" fill="rgb(223,222,226)" stroke="rgb(223,222,226)" stroke-width="0.4"/><polygon points="50.7,129.6 48.3,139.3 34.9,142.1" fill="rgb(223,222,226)" stroke="rgb(223,222,226)" stroke-width="0.4"/><polygon points="38.6,200.6 42.0,210.8 31.6,213.6" fill="rgb(130,122,126)" stroke="rgb(130,122,126)" stroke-width="0.4"/><polygon points="42.0,210.8 36.1,223.7 31.6,213.6" fill="rgb(107,99,103)" stroke="rgb(107,99,103)" stroke-width="0.4"/><polygon points="42.0,210.8 38.6,200.6 49.8,195.0" fill="rgb(153,145,149)" stroke="rgb(153,145,149)" stroke-width="0.4"/><polygon points="56.3,213.6 42.0,210.8 49.8,195.0" fill="rgb(142,134,138)" stroke="rgb(142,134,138)" stroke-width="0.4"/><polygon points="36.1,223.7 42.0,210.8 44.1,229.3" fill="rgb(106,98,102)" stroke="rgb(106,98,102)" stroke-width="0.4"/><polygon points="42.0,210.8 56.3,213.6 44.1,229.3" fill="rgb(112,104,108)" stroke="rgb(112,104,108)" stroke-width="0.4"/><polygon points="105.2,201.0 114.3,200.2 114.3,211.6" fill="rgb(145,137,141)" stroke="rgb(145,137,141)" stroke-width="0.4"/><polygon points="99.2,209.5 105.2,201.0 114.3,211.6" fill="rgb(143,135,139)" stroke="rgb(143,135,139)" stroke-width="0.4"/><polygon points="86.7,212.4 98.7,225.7 86.8,228.1" fill="rgb(107,99,103)" stroke="rgb(107,99,103)" stroke-width="0.4"/><polygon points="86.7,212.4 99.2,209.5 98.7,225.7" fill="rgb(109,101,105)" stroke="rgb(109,101,105)" stroke-width="0.4"/><polygon points="86.7,212.4 86.8,228.1 77.3,210.8" fill="rgb(123,115,119)" stroke="rgb(123,115,119)" stroke-width="0.4"/><polygon points="100.3,155.0 106.1,173.0 90.3,166.1" fill="rgb(237,236,240)" stroke="rgb(237,236,240)" stroke-width="0.4"/><polygon points="106.1,173.0 102.7,179.4 90.3,166.1" fill="rgb(233,232,236)" stroke="rgb(233,232,236)" stroke-width="0.4"/><polygon points="106.1,173.0 100.3,155.0 113.0,151.5" fill="rgb(233,232,236)" stroke="rgb(233,232,236)" stroke-width="0.4"/><polygon points="55.6,169.1 41.2,182.1 47.4,166.8" fill="rgb(224,223,227)" stroke="rgb(224,223,227)" stroke-width="0.4"/><polygon points="41.2,182.1 64.4,184.4 49.8,195.0" fill="rgb(200,199,203)" stroke="rgb(200,199,203)" stroke-width="0.4"/><polygon points="41.2,182.1 55.6,169.1 64.4,184.4" fill="rgb(226,225,229)" stroke="rgb(226,225,229)" stroke-width="0.4"/><polygon points="38.6,200.6 41.2,182.1 49.8,195.0" fill="rgb(186,185,189)" stroke="rgb(186,185,189)" stroke-width="0.4"/><polygon points="30.0,185.6 41.2,182.1 38.6,200.6" fill="rgb(196,195,199)" stroke="rgb(196,195,199)" stroke-width="0.4"/><polygon points="47.4,166.8 41.2,182.1 31.7,171.3" fill="rgb(213,212,216)" stroke="rgb(213,212,216)" stroke-width="0.4"/><polygon points="41.2,182.1 30.0,185.6 31.7,171.3" fill="rgb(221,220,224)" stroke="rgb(221,220,224)" stroke-width="0.4"/><polygon points="159.4,88.4 162.7,97.2 154.0,97.0" fill="rgb(234,233,237)" stroke="rgb(234,233,237)" stroke-width="0.4"/><polygon points="162.7,97.2 159.4,88.4 167.9,86.4" fill="rgb(230,229,233)" stroke="rgb(230,229,233)" stroke-width="0.4"/><polygon points="144.1,89.5 159.4,88.4 154.0,97.0" fill="rgb(235,234,238)" stroke="rgb(235,234,238)" stroke-width="0.4"/><polygon points="159.4,88.4 144.1,89.5 145.2,76.9" fill="rgb(241,240,244)" stroke="rgb(241,240,244)" stroke-width="0.4"/><polygon points="155.2,68.6 159.4,88.4 145.2,76.9" fill="rgb(231,230,234)" stroke="rgb(231,230,234)" stroke-width="0.4"/><polygon points="167.9,86.4 159.4,88.4 155.2,68.6" fill="rgb(236,235,239)" stroke="rgb(236,235,239)" stroke-width="0.4"/><polygon points="50.7,129.6 50.4,118.0 59.3,128.2" fill="rgb(236,235,239)" stroke="rgb(236,235,239)" stroke-width="0.4"/><polygon points="50.4,118.0 50.7,129.6 34.0,120.0" fill="rgb(234,233,237)" stroke="rgb(234,233,237)" stroke-width="0.4"/><polygon points="50.4,118.0 34.0,120.0 41.6,98.9" fill="rgb(234,233,237)" stroke="rgb(234,233,237)" stroke-width="0.4"/><polygon points="46.0,99.0 50.4,118.0 41.6,98.9" fill="rgb(233,232,236)" stroke="rgb(233,232,236)" stroke-width="0.4"/><polygon points="105.2,201.0 89.6,199.3 102.7,179.4" fill="rgb(196,195,199)" stroke="rgb(196,195,199)" stroke-width="0.4"/><polygon points="89.6,199.3 105.2,201.0 99.2,209.5" fill="rgb(163,155,159)" stroke="rgb(163,155,159)" stroke-width="0.4"/><polygon points="86.7,212.4 89.6,199.3 99.2,209.5" fill="rgb(152,144,148)" stroke="rgb(152,144,148)" stroke-width="0.4"/><polygon points="89.6,199.3 86.7,212.4 77.3,210.8" fill="rgb(149,141,145)" stroke="rgb(149,141,145)" stroke-width="0.4"/><polygon points="119.8,170.2 113.0,151.5 127.1,160.2" fill="rgb(223,222,226)" stroke="rgb(223,222,226)" stroke-width="0.4"/><polygon points="119.8,170.2 106.1,173.0 113.0,151.5" fill="rgb(240,239,243)" stroke="rgb(240,239,243)" stroke-width="0.4"/><polygon points="119.8,170.2 127.1,160.2 134.2,165.5" fill="rgb(243,242,246)" stroke="rgb(243,242,246)" stroke-width="0.4"/><polygon points="59.3,128.2 60.7,110.5 70.9,118.3" fill="rgb(243,242,246)" stroke="rgb(243,242,246)" stroke-width="0.4"/><polygon points="50.4,118.0 60.7,110.5 59.3,128.2" fill="rgb(238,237,241)" stroke="rgb(238,237,241)" stroke-width="0.4"/><polygon points="77.2,98.8 60.7,110.5 58.2,96.5" fill="rgb(236,235,239)" stroke="rgb(236,235,239)" stroke-width="0.4"/><polygon points="70.9,118.3 60.7,110.5 77.2,98.8" fill="rgb(246,245,249)" stroke="rgb(246,245,249)" stroke-width="0.4"/><polygon points="60.7,110.5 46.0,99.0 58.2,96.5" fill="rgb(239,238,242)" stroke="rgb(239,238,242)" stroke-width="0.4"/><polygon points="60.7,110.5 50.4,118.0 46.0,99.0" fill="rgb(227,226,230)" stroke="rgb(227,226,230)" stroke-width="0.4"/><polygon points="89.1,180.9 89.6,199.3 77.1,185.6" fill="rgb(213,212,216)" stroke="rgb(213,212,216)" stroke-width="0.4"/><polygon points="89.6,199.3 89.1,180.9 102.7,179.4" fill="rgb(204,203,207)" stroke="rgb(204,203,207)" stroke-width="0.4"/><polygon points="102.7,179.4 89.1,180.9 90.3,166.1" fill="rgb(224,223,227)" stroke="rgb(224,223,227)" stroke-width="0.4"/><polygon points="76.6,173.2 89.1,180.9 77.1,185.6" fill="rgb(228,227,231)" stroke="rgb(228,227,231)" stroke-width="0.4"/><polygon points="89.1,180.9 76.6,173.2 90.3,166.1" fill="rgb(244,243,247)" stroke="rgb(244,243,247)" stroke-width="0.4"/><polygon points="89.6,199.3 75.1,194.0 77.1,185.6" fill="rgb(195,194,198)" stroke="rgb(195,194,198)" stroke-width="0.4"/><polygon points="75.1,194.0 89.6,199.3 77.3,210.8" fill="rgb(165,157,161)" stroke="rgb(165,157,161)" stroke-width="0.4"/><polygon points="60.7,199.4 75.1,194.0 77.3,210.8" fill="rgb(175,167,171)" stroke="rgb(175,167,171)" stroke-width="0.4"/><polygon points="75.1,194.0 64.4,184.4 77.1,185.6" fill="rgb(223,222,226)" stroke="rgb(223,222,226)" stroke-width="0.4"/><polygon points="75.1,194.0 60.7,199.4 64.4,184.4" fill="rgb(197,196,200)" stroke="rgb(197,196,200)" stroke-width="0.4"/><polygon points="140.6,193.3 133.5,179.5 142.4,182.2" fill="rgb(213,212,216)" stroke="rgb(213,212,216)" stroke-width="0.4"/><polygon points="133.5,179.5 119.8,170.2 134.2,165.5" fill="rgb(222,221,225)" stroke="rgb(222,221,225)" stroke-width="0.4"/><polygon points="139.3,165.2 133.5,179.5 134.2,165.5" fill="rgb(225,224,228)" stroke="rgb(225,224,228)" stroke-width="0.4"/><polygon points="142.4,182.2 133.5,179.5 139.3,165.2" fill="rgb(233,232,236)" stroke="rgb(233,232,236)" stroke-width="0.4"/><polygon points="106.1,173.0 119.0,188.6 102.7,179.4" fill="rgb(236,235,239)" stroke="rgb(236,235,239)" stroke-width="0.4"/><polygon points="119.8,170.2 119.0,188.6 106.1,173.0" fill="rgb(234,233,237)" stroke="rgb(234,233,237)" stroke-width="0.4"/><polygon points="105.2,201.0 119.0,188.6 114.3,200.2" fill="rgb(203,195,199)" stroke="rgb(203,195,199)" stroke-width="0.4"/><polygon points="119.0,188.6 105.2,201.0 102.7,179.4" fill="rgb(201,200,204)" stroke="rgb(201,200,204)" stroke-width="0.4"/><polygon points="133.5,179.5 119.0,188.6 119.8,170.2" fill="rgb(231,230,234)" stroke="rgb(231,230,234)" stroke-width="0.4"/><polygon points="114.3,200.2 119.0,188.6 133.7,201.9" fill="rgb(199,191,195)" stroke="rgb(199,191,195)" stroke-width="0.4"/><polygon points="119.0,188.6 140.6,193.3 133.7,201.9" fill="rgb(197,196,200)" stroke="rgb(197,196,200)" stroke-width="0.4"/><polygon points="119.0,188.6 133.5,179.5 140.6,193.3" fill="rgb(220,219,223)" stroke="rgb(220,219,223)" stroke-width="0.4"/><rect x="0" y="177" width="188" height="60" fill="url(#chin)"/></g><polygon points="74.9,129.7 82.0,133.8 82.6,145.6 78.5,151.6 70.2,164.6 64.3,169.3 56.0,171.0 49.5,161.0 51.3,153.9 61.9,143.3 67.8,134.4" fill="#2c2939"/><polygon points="119.5,130.3 130.2,137.4 133.7,148.0 143.2,153.9 146.7,159.8 142.6,169.3 132.6,170.5 126.6,166.9 116.0,149.2 113.0,137.4" fill="#2c2939"/><polygon points="74.9,129.7 82.0,133.8 82.6,145.6 68.0,143.0" fill="#3d3852"/><polygon points="119.5,130.3 130.2,137.4 133.7,148.0 123.0,152.0" fill="#3d3852"/><polygon points="77.0,187.0 81.0,184.0 89.0,184.5 97.0,187.0 105.0,184.5 113.0,184.0 118.0,186.5 111.0,195.0 98.0,204.5 84.0,195.0" fill="#1f1c24"/></svg>
<div class="a" style="left:307px;top:124px;width:187px;height:333px;overflow:hidden">
<div class="a" style="left:-2px;top:271px;width:8px;height:8px;background:radial-gradient(circle,rgba(235,255,255,0.9) 0%,rgba(160,240,240,0.45) 30%,rgba(150,240,240,0) 75%)"></div>
<svg class="a" style="left:-3px;top:270px;" width="10" height="10" viewBox="0 0 10 10"><path d="M5 0V10M0 5H10" stroke="rgba(230,255,255,0.8)" stroke-width="0.6"/></svg>
<div class="a" style="left:2px;top:282px;width:6px;height:6px;background:radial-gradient(circle,rgba(235,255,255,0.9) 0%,rgba(160,240,240,0.45) 30%,rgba(150,240,240,0) 75%)"></div>
<svg class="a" style="left:1px;top:281px;" width="8" height="8" viewBox="0 0 8 8"><path d="M4 0V8M0 4H8" stroke="rgba(230,255,255,0.8)" stroke-width="0.6"/></svg>
<div class="a" style="left:16px;top:282px;width:10px;height:10px;background:radial-gradient(circle,rgba(235,255,255,0.9) 0%,rgba(160,240,240,0.45) 30%,rgba(150,240,240,0) 75%)"></div>
<svg class="a" style="left:15px;top:281px;" width="12" height="12" viewBox="0 0 12 12"><path d="M6 0V12M0 6H12" stroke="rgba(230,255,255,0.8)" stroke-width="0.6"/></svg>
<div class="a" style="left:1px;top:311px;width:8px;height:8px;background:radial-gradient(circle,rgba(235,255,255,0.9) 0%,rgba(160,240,240,0.45) 30%,rgba(150,240,240,0) 75%)"></div>
<svg class="a" style="left:0px;top:310px;" width="10" height="10" viewBox="0 0 10 10"><path d="M5 0V10M0 5H10" stroke="rgba(230,255,255,0.8)" stroke-width="0.6"/></svg>
<div class="a" style="left:21px;top:316px;width:6px;height:6px;background:radial-gradient(circle,rgba(235,255,255,0.9) 0%,rgba(160,240,240,0.45) 30%,rgba(150,240,240,0) 75%)"></div>
<svg class="a" style="left:20px;top:315px;" width="8" height="8" viewBox="0 0 8 8"><path d="M4 0V8M0 4H8" stroke="rgba(230,255,255,0.8)" stroke-width="0.6"/></svg>
<div class="a" style="left:16px;top:319px;width:6px;height:6px;background:radial-gradient(circle,rgba(235,255,255,0.9) 0%,rgba(160,240,240,0.45) 30%,rgba(150,240,240,0) 75%)"></div>
<svg class="a" style="left:15px;top:318px;" width="8" height="8" viewBox="0 0 8 8"><path d="M4 0V8M0 4H8" stroke="rgba(230,255,255,0.8)" stroke-width="0.6"/></svg>
</div>
<div class="a" style="left:779px;top:33px;width:221px;height:432px;background:#535353;"></div>
<div class="a" style="left:779px;top:33px;width:1px;height:432px;background:#5e5e5e;"></div>
<div class="a" style="left:782px;top:39px;width:1px;height:426px;background:#4a4a4a;"></div>
<div class="a" style="left:786px;top:39px;width:1px;height:426px;background:#4a4a4a;"></div>
<div class="a" style="left:789px;top:39px;width:1px;height:426px;background:#474747;"></div>
<div class="a" style="left:809px;top:39px;width:1px;height:426px;background:#3f3f3f;"></div>
<div class="a" style="left:812px;top:39px;width:1px;height:426px;background:#474747;"></div>
<div class="a" style="left:958px;top:39px;width:1px;height:426px;background:#444;"></div>
<div class="a" style="left:961px;top:39px;width:1px;height:426px;background:#474747;"></div>
<div class="a" style="left:657px;top:33px;width:343px;height:6px;background:#3d3d3d;"></div>
<svg class="a" style="left:801px;top:34px;" width="6" height="4" viewBox="0 0 6 4"><path d="M0 1H6M0 3H6" stroke="#aaa" stroke-width="0.8"/></svg>
<svg class="a" style="left:950px;top:34px;" width="6" height="4" viewBox="0 0 6 4"><path d="M0 1H6M0 3H6" stroke="#aaa" stroke-width="0.8"/></svg>
<svg class="a" style="left:992px;top:34px;" width="6" height="4" viewBox="0 0 6 4"><path d="M0 1H6M0 3H6" stroke="#aaa" stroke-width="0.8"/></svg>
<div class="a" style="left:656px;top:39px;width:133px;height:86px;background:#3a3a3a;"></div>
<div class="a" style="left:657px;top:39px;width:131px;height:85px;background:#535353;"></div>
<div class="a" style="left:657px;top:39px;width:131px;height:15px;background:#424242;"></div>
<div class="t" style="left:663px;top:43.5px;font-size:5.6px;color:#b0b0b0;">历史记录</div>
<div class="a" style="left:692px;top:39px;width:1px;height:15px;background:#3a3a3a;"></div>
<div class="a" style="left:693px;top:39px;width:24px;height:15px;background:#535353;"></div>
<div class="t" style="left:697px;top:43px;font-size:6px;color:#ececec;">动作</div>
<div class="a" style="left:717px;top:39px;width:1px;height:15px;background:#3a3a3a;"></div>
<svg class="a" style="left:766px;top:44px;" width="7" height="6" viewBox="0 0 7 6"><path d="M0.5 0.5L3 3L0.5 5.5M3.5 0.5L6 3L3.5 5.5" fill="none" stroke="#cfcfcf"/></svg>
<div class="a" style="left:775px;top:43px;width:1px;height:7px;background:#777;"></div>
<div class="a" style="left:779px;top:45px;width:6px;height:1px;background:#a0a0a0;"></div>
<div class="a" style="left:779px;top:47px;width:6px;height:1px;background:#a0a0a0;"></div>
<div class="a" style="left:779px;top:49px;width:6px;height:1px;background:#a0a0a0;"></div>
<div class="a" style="left:658px;top:67px;width:122px;height:1px;background:#4b4b4b;"></div>
<div class="a" style="left:670px;top:57px;width:1px;height:10px;background:#4b4b4b;"></div>
<div class="a" style="left:682px;top:57px;width:1px;height:10px;background:#4b4b4b;"></div>
<svg class="a" style="left:661px;top:59px;" width="7" height="6" viewBox="0 0 7 6"><path d="M0.8 3L2.8 5L6.2 0.8" fill="none" stroke="#e8e8e8" stroke-width="1.2"/></svg>
<svg class="a" style="left:672px;top:59px;" width="7" height="7" viewBox="0 0 7 7"><rect x="0.5" y="0.5" width="6" height="6" fill="none" stroke="#cfcfcf"/><path d="M0.5 3.5H6.5M3.5 0.5V6.5" stroke="#cfcfcf" stroke-width="0.7"/></svg>
<svg class="a" style="left:684px;top:60px;" width="5" height="4" viewBox="0 0 5 4"><path d="M0.5 0.5L2.5 2.5L4.5 0.5" fill="none" stroke="#aaa"/></svg>
<svg class="a" style="left:692px;top:59px;" width="8" height="6" viewBox="0 0 8 6"><rect x="0" y="1" width="8" height="5" fill="#dcdcdc"/><rect x="0" y="0" width="3" height="2" fill="#dcdcdc"/></svg>
<div class="t" style="left:704px;top:58px;font-size:6px;color:#dedede;">默认动作</div>
<div class="a" style="left:658px;top:77px;width:122px;height:1px;background:#4b4b4b;"></div>
<div class="a" style="left:670px;top:67px;width:1px;height:10px;background:#4b4b4b;"></div>
<div class="a" style="left:682px;top:67px;width:1px;height:10px;background:#4b4b4b;"></div>
<svg class="a" style="left:661px;top:69px;" width="7" height="6" viewBox="0 0 7 6"><path d="M0.8 3L2.8 5L6.2 0.8" fill="none" stroke="#e8e8e8" stroke-width="1.2"/></svg>
<svg class="a" style="left:672px;top:69px;" width="7" height="7" viewBox="0 0 7 7"><rect x="0.5" y="0.5" width="6" height="6" fill="none" stroke="#cfcfcf"/><path d="M0.5 3.5H6.5M3.5 0.5V6.5" stroke="#cfcfcf" stroke-width="0.7"/></svg>
<svg class="a" style="left:691px;top:70px;" width="5" height="4" viewBox="0 0 5 4"><path d="M0.5 0.5L2.5 2.5L4.5 0.5" fill="none" stroke="#aaa"/></svg>
<div class="t" style="left:700px;top:68px;font-size:6px;color:#dedede;">添加效果（选区）</div>
<div class="a" style="left:658px;top:88px;width:122px;height:1px;background:#4b4b4b;"></div>
<div class="a" style="left:670px;top:78px;width:1px;height:10px;background:#4b4b4b;"></div>
<div class="a" style="left:682px;top:78px;width:1px;height:10px;background:#4b4b4b;"></div>
<svg class="a" style="left:661px;top:80px;" width="7" height="6" viewBox="0 0 7 6"><path d="M0.8 3L2.8 5L6.2 0.8" fill="none" stroke="#e8e8e8" stroke-width="1.2"/></svg>
<svg class="a" style="left:699px;top:80px;" width="4" height="6" viewBox="0 0 4 6"><path d="M0.5 0.5L3 3L0.5 5.5" fill="none" stroke="#9a9a9a"/></svg>
<div class="t" style="left:710px;top:79px;font-size:6px;color:#dedede;">建立 快照</div>
<div class="a" style="left:658px;top:98px;width:122px;height:1px;background:#4b4b4b;"></div>
<div class="a" style="left:670px;top:88px;width:1px;height:10px;background:#4b4b4b;"></div>
<div class="a" style="left:682px;top:88px;width:1px;height:10px;background:#4b4b4b;"></div>
<svg class="a" style="left:661px;top:90px;" width="7" height="6" viewBox="0 0 7 6"><path d="M0.8 3L2.8 5L6.2 0.8" fill="none" stroke="#e8e8e8" stroke-width="1.2"/></svg>
<svg class="a" style="left:672px;top:90px;" width="7" height="7" viewBox="0 0 7 7"><rect x="0.5" y="0.5" width="6" height="6" fill="none" stroke="#cfcfcf"/><path d="M0.5 3.5H6.5M3.5 0.5V6.5" stroke="#cfcfcf" stroke-width="0.7"/></svg>
<svg class="a" style="left:699px;top:90px;" width="4" height="6" viewBox="0 0 4 6"><path d="M0.5 0.5L3 3L0.5 5.5" fill="none" stroke="#9a9a9a"/></svg>
<div class="t" style="left:711px;top:89px;font-size:6px;color:#dedede;">羽化</div>
<div class="a" style="left:658px;top:108px;width:122px;height:1px;background:#4b4b4b;"></div>
<div class="a" style="left:670px;top:98px;width:1px;height:10px;background:#4b4b4b;"></div>
<div class="a" style="left:682px;top:98px;width:1px;height:10px;background:#4b4b4b;"></div>
<svg class="a" style="left:661px;top:100px;" width="7" height="6" viewBox="0 0 7 6"><path d="M0.8 3L2.8 5L6.2 0.8" fill="none" stroke="#e8e8e8" stroke-width="1.2"/></svg>
<div class="t" style="left:710px;top:99px;font-size:6px;color:#dedede;">通过拷贝的图层</div>
<div class="a" style="left:780px;top:54px;width:8px;height:56px;background:#4e4e4e;"></div>
<svg class="a" style="left:781px;top:58px;" width="6" height="4" viewBox="0 0 6 4"><path d="M0.5 3.5L3 1L5.5 3.5" fill="none" stroke="#888"/></svg>
<div class="a" style="left:782px;top:65px;width:5px;height:7px;background:#666;"></div>
<svg class="a" style="left:781px;top:100px;" width="6" height="4" viewBox="0 0 6 4"><path d="M0.5 0.5L3 3L5.5 0.5" fill="none" stroke="#888"/></svg>
<div class="a" style="left:657px;top:110px;width:131px;height:11px;background:#535353;"></div>
<div class="a" style="left:657px;top:110px;width:131px;height:1px;background:#474747;"></div>
<svg class="a" style="left:690px;top:111px;" width="7" height="7" viewBox="0 0 7 7"><rect x="1" y="1" width="4" height="4" fill="#b5b5b5"/></svg>
<svg class="a" style="left:705px;top:111px;" width="7" height="7" viewBox="0 0 7 7"><circle cx="3" cy="3" r="2.5" fill="#b5b5b5"/></svg>
<svg class="a" style="left:719px;top:111px;" width="7" height="7" viewBox="0 0 7 7"><path d="M1 0.5V5.5L5.5 3Z" fill="#b5b5b5"/></svg>
<svg class="a" style="left:734px;top:111px;" width="7" height="7" viewBox="0 0 7 7"><rect x="0" y="1" width="7" height="5" fill="#d8d8d8"/></svg>
<svg class="a" style="left:753px;top:111px;" width="7" height="7" viewBox="0 0 7 7"><path d="M1 1H5V5" fill="none" stroke="#d0d0d0"/><rect x="0.5" y="2.5" width="4" height="3.5" fill="none" stroke="#d0d0d0"/></svg>
<svg class="a" style="left:768px;top:111px;" width="7" height="7" viewBox="0 0 7 7"><rect x="1.5" y="1.5" width="4" height="5" fill="none" stroke="#9a9a9a"/></svg>
<div class="a" style="left:657px;top:121px;width:131px;height:3px;background:#424242;"></div>
<div class="a" style="left:791px;top:61px;width:17px;height:14px;background:#383838;"></div>
<svg class="a" style="left:794px;top:62px;" width="11" height="12" viewBox="0 0 11 12"><path d="M2 2V10L10 6Z" fill="#f0f0f0"/></svg>
<svg class="a" style="left:793.5px;top:45px" width="12" height="12" viewBox="0 0 12 12"><path d="M3 2V10" stroke="#e0e0e0" stroke-width="2"/><path d="M6 4Q10 5 8 9" fill="none" stroke="#ddd" stroke-width="1.2"/><path d="M7 9L9 10L8 7" fill="#ddd"/></svg>
<svg class="a" style="left:793.5px;top:81px" width="12" height="12" viewBox="0 0 12 12"><circle cx="6" cy="6" r="5" fill="none" stroke="#e0e0e0" stroke-width="1.2"/><path d="M6 3V9" stroke="#e0e0e0" stroke-width="1.4"/></svg>
<svg class="a" style="left:793.5px;top:102px" width="12" height="12" viewBox="0 0 12 12"><path d="M2 1H5V4H2Z" fill="#ccc"/><path d="M10 2L4 9" stroke="#e8e8e8" stroke-width="1.8"/><path d="M4 9L2 11L5 10Z" fill="#e8e8e8"/></svg>
<svg class="a" style="left:793.5px;top:117px" width="12" height="12" viewBox="0 0 12 12"><path d="M1 3H11M1 8H11" stroke="#e0e0e0" stroke-width="1.2"/><rect x="3" y="1.5" width="2" height="3" fill="#eee"/><rect x="7" y="6.5" width="2" height="3" fill="#eee"/></svg>
<svg class="a" style="left:793.5px;top:139px" width="12" height="12" viewBox="0 0 12 12"><path d="M1 10L4 2L7 10M2.2 7H5.8" fill="none" stroke="#e0e0e0" stroke-width="1.2"/><path d="M9 1V11" stroke="#ccc"/></svg>
<svg class="a" style="left:793.5px;top:152px" width="12" height="12" viewBox="0 0 12 12"><path d="M5 1H10V10M7.5 1V10" fill="none" stroke="#e0e0e0" stroke-width="1.2"/><circle cx="4.5" cy="3.5" r="2.5" fill="#e0e0e0"/></svg>
<svg class="a" style="left:793.5px;top:175px" width="12" height="12" viewBox="0 0 12 12"><rect x="1.5" y="1.5" width="9" height="9" fill="none" stroke="#e0e0e0" stroke-width="1.2"/><rect x="4" y="4" width="4" height="3" fill="#e0e0e0"/></svg>
<svg class="a" style="left:793.5px;top:189px" width="12" height="12" viewBox="0 0 12 12"><rect x="1.5" y="1.5" width="9" height="9" fill="#e0e0e0"/><path d="M3 4H9M3 6H9M3 8H7" stroke="#555" stroke-width="0.8"/></svg>
<svg class="a" style="left:793.5px;top:210px" width="12" height="12" viewBox="0 0 12 12"><path d="M6 1L11 3.5V8.5L6 11L1 8.5V3.5Z" fill="none" stroke="#d8d8d8" stroke-width="1.1"/><path d="M1 3.5L6 6L11 3.5M6 6V11" fill="none" stroke="#d8d8d8" stroke-width="0.9"/></svg>
<div class="a" style="left:790px;top:77px;width:19px;height:1px;background:#474747;"></div>
<div class="a" style="left:790px;top:97px;width:19px;height:1px;background:#474747;"></div>
<div class="a" style="left:790px;top:133px;width:19px;height:1px;background:#474747;"></div>
<div class="a" style="left:790px;top:168px;width:19px;height:1px;background:#474747;"></div>
<div class="a" style="left:790px;top:203px;width:19px;height:1px;background:#474747;"></div>
<div class="a" style="left:790px;top:227px;width:19px;height:1px;background:#474747;"></div>
<div class="a" style="left:813px;top:39px;width:145px;height:15px;background:#424242;"></div>
<div class="a" style="left:813px;top:39px;width:18px;height:15px;background:#535353;"></div>
<div class="t" style="left:815px;top:43px;font-size:6px;color:#ececec;">颜色</div>
<div class="a" style="left:831px;top:39px;width:1px;height:15px;background:#3a3a3a;"></div>
<div class="t" style="left:836px;top:43px;font-size:6px;color:#b0b0b0;">色板</div>
<div class="a" style="left:850px;top:39px;width:1px;height:15px;background:#3a3a3a;"></div>
<div class="a" style="left:950px;top:45px;width:6px;height:1px;background:#a0a0a0;"></div>
<div class="a" style="left:950px;top:47px;width:6px;height:1px;background:#a0a0a0;"></div>
<div class="a" style="left:950px;top:49px;width:6px;height:1px;background:#a0a0a0;"></div>
<div class="a" style="left:822px;top:66px;width:9px;height:9px;background:#040404;border:1px solid #999"></div>
<div class="a" style="left:815px;top:59px;width:10px;height:10px;background:#c4142c;border:1px solid #eee"></div>
<div class="a" style="left:816px;top:78px;width:2px;height:1px;background:#888;"></div>
<div class="a" style="left:826px;top:78px;width:2px;height:1px;background:#888;"></div>
<div class="a" style="left:834px;top:57px;width:98px;height:83px;background:linear-gradient(to bottom,rgba(0,0,0,0),#000),linear-gradient(to right,#fff,#ff0030);"></div>
<div class="a" style="left:913px;top:79px;width:8px;height:8px;border:1px solid #f0d0d8;border-radius:50%"></div>
<div class="a" style="left:939px;top:57px;width:14px;height:85px;background:#5b5b5b;"></div>
<div class="a" style="left:941px;top:58px;width:11px;height:83px;background:linear-gradient(to bottom,#ff0030 0%,#ff00ff 17%,#0000ff 34%,#00ffff 50%,#00ff00 66%,#ffff00 83%,#ff0000 100%);"></div>
<svg class="a" style="left:936px;top:57px;" width="4" height="4" viewBox="0 0 4 4"><path d="M0 0H4V4H0Z" fill="#f4f4f4"/></svg>
<div class="a" style="left:813px;top:146px;width:145px;height:6px;background:#474747;"></div>
<div class="a" style="left:813px;top:152px;width:145px;height:14px;background:#424242;"></div>
<div class="a" style="left:813px;top:152px;width:18px;height:14px;background:#535353;"></div>
<div class="t" style="left:815px;top:155px;font-size:6px;color:#ececec;">属性</div>
<div class="a" style="left:831px;top:152px;width:1px;height:14px;background:#3a3a3a;"></div>
<div class="t" style="left:836px;top:155px;font-size:6px;color:#b0b0b0;">调整</div>
<div class="a" style="left:852px;top:152px;width:1px;height:14px;background:#3a3a3a;"></div>
<div class="a" style="left:950px;top:158px;width:6px;height:1px;background:#a0a0a0;"></div>
<div class="a" style="left:950px;top:160px;width:6px;height:1px;background:#a0a0a0;"></div>
<div class="a" style="left:950px;top:162px;width:6px;height:1px;background:#a0a0a0;"></div>
<svg class="a" style="left:817px;top:171px;" width="10" height="9" viewBox="0 0 10 9"><rect x="0.5" y="0.5" width="9" height="8" fill="#222" stroke="#ddd"/><path d="M1.5 7L4 4L6 6L7 5L8.5 7Z" fill="#ddd"/><circle cx="6.5" cy="2.8" r="0.9" fill="#ddd"/></svg>
<div class="t" style="left:831px;top:172px;font-size:6.2px;color:#e2e2e2;">蒙版图层属性</div>
<div class="a" style="left:814px;top:183px;width:135px;height:1px;background:#474747;"></div>
<div class="a" style="left:950px;top:167px;width:8px;height:137px;background:#4d4d4d;"></div>
<div class="t" style="left:815px;top:193px;font-size:6.5px;color:#cfcfcf;">W:</div>
<div class="a" style="left:826px;top:191px;width:30px;height:11px;background:#484848;border:1px solid #3d3d3d"></div>
<div class="t" style="left:828px;top:193px;font-size:6px;color:#dedede;">15.39 厘米</div>
<div class="a" style="left:860px;top:190px;width:13px;height:13px;background:#383838;"></div>
<svg class="a" style="left:862px;top:193px;" width="9" height="6" viewBox="0 0 9 6"><path d="M3 1H1.5Q0.5 1 0.5 3Q0.5 5 1.5 5H3M6 1H7.5Q8.5 1 8.5 3Q8.5 5 7.5 5H6M3 3H6" fill="none" stroke="#ccc" stroke-width="0.9"/></svg>
<div class="t" style="left:879px;top:193px;font-size:6.5px;color:#cfcfcf;">H:</div>
<div class="a" style="left:888px;top:191px;width:30px;height:11px;background:#484848;border:1px solid #3d3d3d"></div>
<div class="t" style="left:890px;top:193px;font-size:6px;color:#dedede;">31.08 厘米</div>
<div class="t" style="left:815px;top:209px;font-size:6.5px;color:#cfcfcf;">X:</div>
<div class="a" style="left:826px;top:207px;width:30px;height:11px;background:#484848;border:1px solid #3d3d3d"></div>
<div class="t" style="left:829px;top:209px;font-size:6px;color:#dedede;">4.48 厘米</div>
<div class="t" style="left:879px;top:209px;font-size:6.5px;color:#cfcfcf;">Y:</div>
<div class="a" style="left:888px;top:207px;width:30px;height:11px;background:#484848;border:1px solid #3d3d3d"></div>
<div class="t" style="left:890px;top:209px;font-size:6px;color:#dedede;">14.82 厘米</div>
<div class="a" style="left:813px;top:314px;width:145px;height:4px;background:#474747;"></div>
<div class="a" style="left:813px;top:318px;width:145px;height:14px;background:#424242;"></div>
<div class="a" style="left:813px;top:318px;width:18px;height:14px;background:#535353;"></div>
<div class="t" style="left:815px;top:321px;font-size:6px;color:#ececec;">图层</div>
<div class="a" style="left:831px;top:318px;width:1px;height:14px;background:#3a3a3a;"></div>
<div class="t" style="left:837px;top:321px;font-size:6px;color:#b0b0b0;">通道</div>
<div class="a" style="left:853px;top:318px;width:1px;height:14px;background:#3a3a3a;"></div>
<div class="t" style="left:858px;top:321px;font-size:6px;color:#b0b0b0;">路径</div>
<div class="a" style="left:874px;top:318px;width:1px;height:14px;background:#3a3a3a;"></div>
<div class="a" style="left:950px;top:324px;width:6px;height:1px;background:#a0a0a0;"></div>
<div class="a" style="left:950px;top:326px;width:6px;height:1px;background:#a0a0a0;"></div>
<div class="a" style="left:950px;top:328px;width:6px;height:1px;background:#a0a0a0;"></div>
<div class="a" style="left:839px;top:339px;width:18px;height:11px;background:#404040;border:1px solid #3a3a3a"></div>
<svg class="a" style="left:816px;top:338px;" width="7" height="7" viewBox="0 0 7 7"><circle cx="3" cy="3" r="2" fill="none" stroke="#eee" stroke-width="1.1"/><path d="M4.5 4.5L6.5 6.5" stroke="#eee" stroke-width="1.2"/></svg>
<div class="t" style="left:824px;top:338px;font-size:6.5px;color:#dedede;">类型</div>
<svg class="a" style="left:849px;top:341px;" width="5" height="4" viewBox="0 0 5 4"><path d="M0.5 0.5L2.5 2.5L4.5 0.5" fill="none" stroke="#aaa"/></svg>
<svg class="a" style="left:864px;top:337px;" width="9" height="10" viewBox="0 0 9 10"><rect x="0.5" y="1.5" width="8" height="6" fill="none" stroke="#ccc"/><path d="M1 7L3.5 4L5.5 6L8 3.5V7Z" fill="#ccc"/></svg>
<svg class="a" style="left:876px;top:337px;" width="9" height="10" viewBox="0 0 9 10"><circle cx="4.5" cy="4.5" r="3.8" fill="#ddd"/><path d="M4.5 0.7A3.8 3.8 0 0 1 4.5 8.3Z" fill="#555"/></svg>
<svg class="a" style="left:889px;top:337px;" width="9" height="10" viewBox="0 0 9 10"><path d="M1 1.5H8M4.5 1.5V8.5" stroke="#ddd" stroke-width="1.2"/></svg>
<svg class="a" style="left:902px;top:337px;" width="9" height="10" viewBox="0 0 9 10"><path d="M2.5 0V9M6.5 0V9M0 2.5H9M0 6.5H9" stroke="#ddd" stroke-width="0.9"/></svg>
<svg class="a" style="left:914px;top:337px;" width="9" height="10" viewBox="0 0 9 10"><rect x="1.5" y="4" width="6" height="5" fill="#ddd"/><path d="M3 4V2.5Q4.5 0.5 6 2.5V4" fill="none" stroke="#ddd"/></svg>
<svg class="a" style="left:928px;top:337px;" width="9" height="10" viewBox="0 0 9 10"><circle cx="4.5" cy="4.5" r="3" fill="#eee"/></svg>
<div class="a" style="left:860px;top:349px;width:1px;height:1px;background:#535353;"></div>
<div class="a" style="left:814px;top:352px;width:59px;height:13px;background:#4a4a4a;border:1px solid #3f3f3f"></div>
<div class="a" style="left:831px;top:353px;width:41px;height:11px;background:#414141;"></div>
<div class="t" style="left:816px;top:354px;font-size:6.5px;color:#dedede;">正常</div>
<svg class="a" style="left:864px;top:357px;" width="5" height="4" viewBox="0 0 5 4"><path d="M0.5 0.5L2.5 2.5L4.5 0.5" fill="none" stroke="#aaa"/></svg>
<div class="t" style="left:876px;top:354px;font-size:6.5px;color:#cfcfcf;">不透明度:</div>
<div class="a" style="left:907px;top:352px;width:20px;height:12px;background:#484848;border:1px solid #3d3d3d"></div>
<div class="t" style="left:909px;top:354px;font-size:6px;color:#dedede;">100%</div>
<svg class="a" style="left:930px;top:357px;" width="5" height="4" viewBox="0 0 5 4"><path d="M0.5 0.5L2.5 2.5L4.5 0.5" fill="none" stroke="#aaa"/></svg>
<div class="t" style="left:814px;top:369px;font-size:6.5px;color:#cfcfcf;">锁定:</div>
<svg class="a" style="left:833px;top:369px;" width="8" height="8" viewBox="0 0 8 8"><rect x="0.5" y="0.5" width="7" height="7" fill="none" stroke="#ccc"/><path d="M0.5 4H7.5M4 0.5V7.5" stroke="#ccc"/></svg>
<svg class="a" style="left:845px;top:369px;" width="8" height="8" viewBox="0 0 8 8"><path d="M7 0.5L2 6" stroke="#ddd" stroke-width="1.5"/><path d="M2 6L0.5 7.5L3 7Z" fill="#ddd"/></svg>
<svg class="a" style="left:856px;top:369px;" width="8" height="8" viewBox="0 0 8 8"><path d="M4 0V8M0 4H8" stroke="#ddd" stroke-width="1.1"/></svg>
<svg class="a" style="left:868px;top:369px;" width="8" height="8" viewBox="0 0 8 8"><path d="M1 1V7H4M5 2L7 5V7" fill="none" stroke="#ddd" stroke-width="1"/></svg>
<svg class="a" style="left:879px;top:369px;" width="8" height="8" viewBox="0 0 8 8"><rect x="1" y="3.5" width="6" height="4.5" fill="#ddd"/><path d="M2.5 3.5V2Q4 0 5.5 2V3.5" fill="none" stroke="#ddd"/></svg>
<div class="t" style="left:889px;top:369px;font-size:6.5px;color:#cfcfcf;">填充:</div>
<div class="a" style="left:907px;top:367px;width:20px;height:12px;background:#484848;border:1px solid #3d3d3d"></div>
<div class="t" style="left:909px;top:369px;font-size:6px;color:#dedede;">100%</div>
<svg class="a" style="left:930px;top:372px;" width="5" height="4" viewBox="0 0 5 4"><path d="M0.5 0.5L2.5 2.5L4.5 0.5" fill="none" stroke="#aaa"/></svg>
<div class="a" style="left:813px;top:381px;width:137px;height:1px;background:#454545;"></div>
<div class="a" style="left:813px;top:398px;width:137px;height:1px;background:#474747;"></div>
<div class="a" style="left:825px;top:379px;width:1px;height:19px;background:#474747;"></div>
<div class="a" style="left:828px;top:381px;width:10px;height:16px;background:repeating-conic-gradient(#ffffff 0 25%,#d8d8d8 0 50%) 0 0/4px 4px;"></div>
<div class="t" style="left:842px;top:384px;font-size:6px;color:#e2e2e2;">图层 2 拷贝 4</div>
<div class="a" style="left:816px;top:384px;width:5px;height:8px;background:rgba(0,0,0,0);border:1px solid #4c4c4c"></div>
<div class="a" style="left:813px;top:420px;width:137px;height:1px;background:#474747;"></div>
<div class="a" style="left:825px;top:398px;width:1px;height:22px;background:#474747;"></div>
<div class="a" style="left:828px;top:400px;width:10px;height:19px;background:repeating-conic-gradient(#ffffff 0 25%,#d8d8d8 0 50%) 0 0/4px 4px;"></div>
<div class="t" style="left:842px;top:405px;font-size:6px;color:#e2e2e2;">图层 3</div>
<svg class="a" style="left:813px;top:406px;" width="10" height="6" viewBox="0 0 10 6"><path d="M0.5 3Q5 -1.5 9.5 3Q5 7.5 0.5 3Z" fill="#e8e8e8"/><circle cx="5" cy="3" r="1.5" fill="#535353"/></svg>
<div class="a" style="left:813px;top:441px;width:137px;height:1px;background:#474747;"></div>
<div class="a" style="left:825px;top:420px;width:1px;height:21px;background:#474747;"></div>
<div class="a" style="left:828px;top:422px;width:10px;height:18px;background:repeating-conic-gradient(#ffffff 0 25%,#d8d8d8 0 50%) 0 0/4px 4px;"></div>
<div class="t" style="left:842px;top:426px;font-size:6px;color:#e2e2e2;">形状 1 拷贝 2</div>
<div class="a" style="left:816px;top:426px;width:5px;height:8px;background:rgba(0,0,0,0);border:1px solid #4c4c4c"></div>
<div class="a" style="left:813px;top:465px;width:137px;height:1px;background:#474747;"></div>
<div class="a" style="left:825px;top:441px;width:1px;height:24px;background:#474747;"></div>
<div class="a" style="left:828px;top:443px;width:10px;height:21px;background:repeating-conic-gradient(#ffffff 0 25%,#d8d8d8 0 50%) 0 0/4px 4px;"></div>
<div class="a" style="left:816px;top:449px;width:5px;height:8px;background:rgba(0,0,0,0);border:1px solid #4c4c4c"></div>
<svg class="a" style="left:829px;top:384px;" width="8" height="10" viewBox="0 0 8 10"><circle cx="4" cy="5" r="3" fill="none" stroke="#666" stroke-width="0.8"/></svg>
<div class="a" style="left:829px;top:432px;width:4px;height:7px;background:#222;"></div>
<div class="a" style="left:884px;top:443px;width:1px;height:22px;background:#474747;"></div>
<div class="a" style="left:950px;top:382px;width:8px;height:83px;background:#4a4a4a;"></div>
<svg class="a" style="left:951px;top:385px;" width="6" height="4" viewBox="0 0 6 4"><path d="M0.5 3.5L3 1L5.5 3.5" fill="none" stroke="#999"/></svg>
<div class="a" style="left:952px;top:400px;width:4px;height:65px;background:#6a6a6a;"></div>
<div class="a" style="left:962px;top:39px;width:38px;height:426px;background:#535353;"></div>
<svg class="a" style="left:966px;top:47px;" width="8" height="11" viewBox="0 0 8 11"><circle cx="4" cy="4" r="3.2" fill="none" stroke="#e8e8e8" stroke-width="1.1"/><rect x="2.5" y="7.5" width="3" height="3" fill="#e8e8e8"/></svg>
<div class="t" style="left:980px;top:49px;font-size:6.5px;color:#e0e0e0;">学习</div>
<div class="a" style="left:962px;top:62px;width:38px;height:1px;background:#474747;"></div>
<svg class="a" style="left:965px;top:69px;" width="12" height="9" viewBox="0 0 12 9"><ellipse cx="6" cy="4.5" rx="5.5" ry="4" fill="#d0d0d0"/><path d="M2 3.5L6 2L10 3.5M2 5.5L6 7L10 5.5" fill="none" stroke="#666" stroke-width="0.8"/></svg>
<div class="t" style="left:981px;top:70px;font-size:6.5px;color:#e0e0e0;">库</div>
<div class="a" style="left:962px;top:81px;width:38px;height:1px;background:#474747;"></div>
<div class="a" style="left:989px;top:92px;width:24px;height:24px;border-radius:50%;background:radial-gradient(circle at 40% 40%,#7fdc7f,#3cb93c);border:1.5px solid #e6f5e6"></div>
</body></html>
